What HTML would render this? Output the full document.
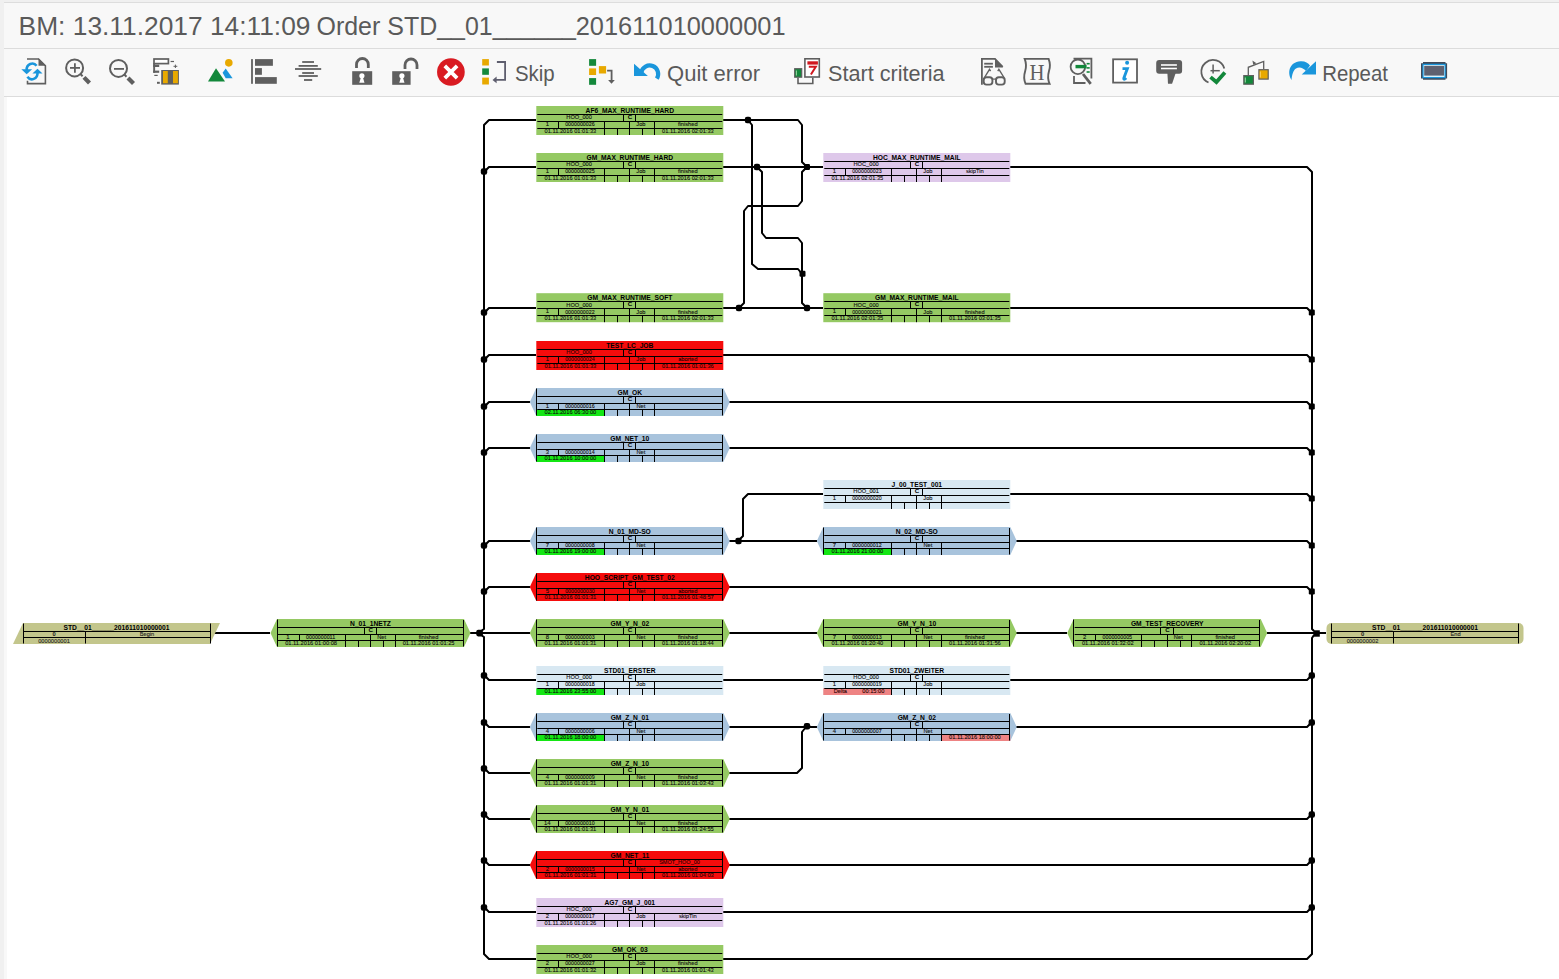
<!DOCTYPE html>
<html><head><meta charset="utf-8">
<style>
html,body{margin:0;padding:0;}
body{width:1559px;height:979px;overflow:hidden;background:#fff;position:relative;font-family:"Liberation Sans",sans-serif;}
.hdr{position:absolute;left:0;top:0;width:1559px;height:97px;background:#F8F8F8;}
.title{position:absolute;left:19px;top:8px;font-size:25.5px;color:#555;white-space:nowrap;line-height:34px;}
.lbl{position:absolute;top:59px;color:#5a5a5a;white-space:nowrap;line-height:26px;}
svg{position:absolute;left:0;top:0;}
</style></head><body>
<div class="hdr"></div>
<svg width="1559" height="979" viewBox="0 0 1559 979" font-family="Liberation Sans">
<rect x="0" y="0" width="1559" height="2" fill="#F0F0F0"/>
<rect x="0" y="2" width="1559" height="1" fill="#DDDDDD"/>
<rect x="4" y="48" width="1555" height="1" fill="#DCDCDC"/>
<rect x="4" y="96" width="1555" height="1" fill="#DCDCDC"/>
<rect x="0" y="0" width="4" height="979" fill="#F0F0F0"/>
<rect x="4" y="97" width="3" height="882" fill="#F8F8F8"/>
<g>
<path d="M27,59 H38.5 L45.4,65.8 V83.6 H27.5 V80.8" fill="none" stroke="#5F5F5F" stroke-width="1.6"/>
<path d="M38.5,58.2 L46.1,65.8 H38.5 Z" fill="#5F5F5F"/>
<path d="M26.7,70 A5.6,6 0 0 1 36.6,65.8" fill="none" stroke="#1A96DC" stroke-width="2.6"/>
<polygon points="21.3,69.3 32.1,69.3 26.7,74.2" fill="#1A96DC"/>
<path d="M37.5,73 A5.6,6 0 0 1 27.4,76.8" fill="none" stroke="#1A96DC" stroke-width="2.6"/>
<polygon points="32.4,73.6 42.5,73.6 37.5,68.8" fill="#1A96DC"/>
</g>
<g fill="none" stroke="#5F5F5F">
<circle cx="74.6" cy="67.9" r="8.5" stroke-width="2"/>
<line x1="80.2" y1="73.8" x2="82.6" y2="76.2" stroke-width="2"/>
<line x1="84" y1="77.4" x2="89.5" y2="83" stroke-width="4.2"/>
<line x1="70" y1="67.9" x2="80" y2="67.9" stroke-width="1.8"/>
<line x1="74.9" y1="63.2" x2="74.9" y2="72.7" stroke-width="1.8"/>
</g>
<g fill="none" stroke="#5F5F5F">
<circle cx="118.5" cy="68.4" r="8.5" stroke-width="2"/>
<line x1="124.1" y1="74.3" x2="126.5" y2="76.7" stroke-width="2"/>
<line x1="128" y1="77.9" x2="133.5" y2="83.4" stroke-width="4.2"/>
<line x1="114" y1="68.9" x2="124" y2="68.9" stroke-width="1.8"/>
</g>
<g>
<rect x="154" y="59" width="14.4" height="4.6" fill="#fff" stroke="#5F5F5F" stroke-width="1.7"/>
<rect x="153.2" y="63" width="1.9" height="9.8" fill="#5F5F5F"/>
<rect x="153.2" y="64.6" width="6" height="2.4" fill="#5F5F5F"/>
<rect x="153.2" y="70.6" width="6" height="2.2" fill="#5F5F5F"/>
<rect x="161.2" y="70" width="17.7" height="14.6" fill="#5F5F5F"/>
<rect x="163" y="71" width="4.8" height="12.2" fill="#E8A900"/>
<rect x="173" y="71" width="4.9" height="12.2" fill="#E8A900"/>
<line x1="170.6" y1="61.5" x2="174" y2="61.5" stroke="#5F5F5F" stroke-width="1.2"/>
<path d="M173.5,66.3 H177.3 M175.4,64.6 V68" stroke="#5F5F5F" stroke-width="1"/>
<line x1="154.3" y1="75.4" x2="157.7" y2="75.4" stroke="#5F5F5F" stroke-width="1.2"/>
<line x1="157" y1="82.8" x2="159.8" y2="82.8" stroke="#5F5F5F" stroke-width="2"/>
</g>
<g>
<polygon points="208,81.4 216,68.2 225,81.4" fill="#13883B"/>
<polygon points="222.6,72.75 225.7,68.6 232.6,78.3 225.7,78.3" fill="#1A96DC"/>
<circle cx="228.8" cy="62.85" r="3.8" fill="#E8A900"/>
</g>
<g fill="#5F5F5F">
<rect x="251.1" y="59.1" width="1.8" height="24.7"/>
<rect x="255" y="59.1" width="17.9" height="6.7"/>
<rect x="255" y="68.1" width="6.9" height="6.7"/>
<rect x="255" y="77.1" width="21.8" height="6.7"/>
</g>
<g stroke="#5F5F5F" stroke-width="1.8">
<line x1="302.2" y1="62" x2="314" y2="62"/>
<line x1="298.6" y1="65.9" x2="317.8" y2="65.9"/>
<line x1="295" y1="69" x2="321.2" y2="69"/>
<line x1="302.2" y1="73" x2="314" y2="73"/>
<line x1="298.6" y1="76" x2="317.8" y2="76"/>
<line x1="304" y1="80" x2="312.2" y2="80"/>
</g>
<g>
<path d="M356.5,67.9 V64.4 A5.9,5.9 0 0 1 368.3,64.4 V67.9" fill="none" stroke="#5F5F5F" stroke-width="2.8"/>
<rect x="352.2" y="71.2" width="20" height="13.6" fill="#5F5F5F"/>
<circle cx="361.9" cy="75.8" r="2.6" fill="#fff"/>
<polygon points="360.9,77.5 362.9,77.5 364.5,82.7 359.3,82.7" fill="#fff"/>
</g>
<g>
<path d="M405,68.9 V65 A6,6 0 0 1 417,65 V68.9" fill="none" stroke="#5F5F5F" stroke-width="2.8"/>
<rect x="392.2" y="71.2" width="18.4" height="13.6" fill="#5F5F5F"/>
<circle cx="401.9" cy="75.8" r="2.6" fill="#fff"/>
<polygon points="400.9,77.5 402.9,77.5 404.5,82.7 399.3,82.7" fill="#fff"/>
</g>
<g>
<circle cx="450.9" cy="72" r="13.85" fill="#D91B22"/>
<path d="M444.8,65.8 L457.1,78.1 M457.1,65.8 L444.8,78.1" stroke="#fff" stroke-width="3.8"/>
</g>
<g>
<rect x="482.2" y="59.1" width="6.7" height="6.4" fill="#E8A900"/>
<rect x="482.2" y="68.4" width="6.7" height="6.4" fill="#13883B"/>
<rect x="482.2" y="77.6" width="6.7" height="6.9" fill="#E8A900"/>
<path d="M496.9,62 H505.1 V79.9 H495.5" fill="none" stroke="#5E5E6E" stroke-width="1.8"/>
<polygon points="492.5,79.9 496.6,76.6 496.6,83.2" fill="#5E5E6E"/>
</g>
<g>
<rect x="589.1" y="59.1" width="7" height="6.7" fill="#13883B"/>
<rect x="589.1" y="68.4" width="7" height="6.6" fill="#E8A900"/>
<rect x="589.1" y="78.1" width="7" height="6.7" fill="#13883B"/>
<rect x="598.9" y="66.1" width="7.2" height="7.4" fill="#E8A900"/>
<path d="M607.1,70.7 H611.6 V81" fill="none" stroke="#5F5F5F" stroke-width="1.8"/>
<polygon points="608.1,80 614.8,80 611.5,83.8" fill="#5F5F5F"/>
</g>
<g>
<path d="M641.3,72.5 A8.5,8.5 0 1 1 656.8,78.6" fill="none" stroke="#1A96DC" stroke-width="4.2"/>
<polygon points="634,63.7 634,76.1 647.9,76.1" fill="#1A96DC"/>
</g>
<g>
<rect x="804.9" y="58.8" width="14.4" height="18.2" fill="#fff" stroke="#5F5F5F" stroke-width="1.6"/>
<rect x="807.4" y="61.3" width="10.5" height="3.3" fill="#D0171F"/>
<path d="M808.8,66.8 H815.8 L810.9,74.5" fill="none" stroke="#D0171F" stroke-width="2"/>
<path d="M798,77.8 V83.5 H812.8 V77.8" fill="none" stroke="#5F5F5F" stroke-width="1.6"/>
<rect x="794.7" y="68.7" width="7" height="8.5" fill="#13883B" stroke="#5F5F5F" stroke-width="1.2"/>
<line x1="796.4" y1="70.5" x2="796.4" y2="75.5" stroke="#BFE8BF" stroke-width="0.8"/>
</g>
<g fill="none" stroke="#5F5F5F">
<path d="M981.9,84.8 V58.9 H995 L1002.7,66.8" stroke-width="1.8"/>
<path d="M995,58.9 L1002.7,66.8 V67.6 H995 Z" fill="#5F5F5F" stroke="none"/>
<line x1="984.2" y1="63.7" x2="992.9" y2="63.7" stroke-width="1.8"/>
<line x1="984.2" y1="66.8" x2="992.9" y2="66.8" stroke-width="1.8"/>
<rect x="983.7" y="77.3" width="8.7" height="7.3" rx="2.8" stroke-width="1.9"/>
<rect x="996" y="77.3" width="8.7" height="7.3" rx="2.8" stroke-width="1.9"/>
<path d="M984.5,77.5 L989.5,69.4 L990.6,71.2 M1004,77.5 L998.9,69.4 L997.8,71.2" stroke-width="1.4"/>
<line x1="992.4" y1="79.1" x2="996" y2="79.1" stroke-width="1.2"/>
</g>
<g>
<path d="M1024.7,58.9 H1048.6 Q1051,65 1049,71 Q1047,78 1049.6,83.8 H1025.6 Q1023,78 1025.2,71 Q1027,65 1024.7,58.9 Z" fill="none" stroke="#5F5F5F" stroke-width="1.9"/>
<text x="1036.9" y="79.7" font-size="23" fill="#5F5F5F" text-anchor="middle" font-family="Liberation Serif" textLength="15" lengthAdjust="spacingAndGlyphs">H</text>
</g>
<g fill="none" stroke="#5F5F5F">
<path d="M1073.5,58.6 H1091.4 V78.6" stroke-width="1.8"/>
<path d="M1074,76 V83 H1085.5" stroke-width="1.8"/>
<circle cx="1077.9" cy="66.8" r="7.3" fill="#F8F8F8" stroke-width="1.8"/>
<line x1="1083" y1="74" x2="1090.7" y2="83.8" stroke-width="2.8"/>
<line x1="1075.5" y1="66.6" x2="1086.6" y2="66.6" stroke="#13883B" stroke-width="3.4"/>
<line x1="1086.6" y1="63.7" x2="1089.7" y2="63.7" stroke="#13883B" stroke-width="1.6"/>
<line x1="1086.6" y1="67.9" x2="1089.7" y2="67.9" stroke="#13883B" stroke-width="1.6"/>
<line x1="1086.6" y1="72" x2="1089.7" y2="72" stroke="#13883B" stroke-width="1.6"/>
</g>
<g>
<rect x="1113.1" y="59.3" width="23.9" height="23.3" fill="#fff" stroke="#5F5F5F" stroke-width="1.8"/>
<circle cx="1127.1" cy="62.7" r="2" fill="#1A96DC"/>
<path d="M1122.5,68.6 H1127.4 L1123.8,78.2 Q1123.4,80.5 1126.3,78" fill="none" stroke="#1A96DC" stroke-width="2.8"/>
</g>
<g>
<rect x="1156.2" y="59.9" width="25.9" height="13.9" rx="3" fill="#5F5F5F"/>
<polygon points="1167.4,73 1175.7,73 1172.1,83.8 1168,83.8" fill="#5F5F5F"/>
<line x1="1161" y1="65" x2="1176.9" y2="65" stroke="#fff" stroke-width="1.6"/>
<line x1="1161" y1="68.5" x2="1176.9" y2="68.5" stroke="#fff" stroke-width="1.6"/>
</g>
<g>
<path d="M1208.5,82.5 A11.7,11.7 0 1 1 1224.3,68.5" fill="none" stroke="#5F5F5F" stroke-width="1.8"/>
<line x1="1213.1" y1="64.5" x2="1213.1" y2="73.5" stroke="#5F5F5F" stroke-width="1.5"/>
<line x1="1210.5" y1="70.7" x2="1219.8" y2="70.7" stroke="#5F5F5F" stroke-width="1.5"/>
<path d="M1210.5,77.1 L1216.4,82 L1224.9,72.5" fill="none" stroke="#13883B" stroke-width="3.8"/>
</g>
<g>
<path d="M1248.3,75 V67.3 L1263.7,61.4 V69.1" fill="none" stroke="#5F5F5F" stroke-width="1.3"/>
<polygon points="1252.4,60.4 1253.2,64.8 1256.5,63.2" fill="#5F5F5F"/>
<rect x="1243.8" y="75.6" width="9.6" height="8.6" fill="#13883B" stroke="#5F5F5F" stroke-width="1.2"/>
<rect x="1258.9" y="69.7" width="9.3" height="9.4" fill="#E8A900" stroke="#5F5F5F" stroke-width="1.2"/>
<line x1="1245.3" y1="77.5" x2="1245.3" y2="82.5" stroke="#C8F0C8" stroke-width="0.8"/>
<line x1="1260.3" y1="71.5" x2="1260.3" y2="77.5" stroke="#FFE08A" stroke-width="0.8"/>
</g>
<g>
<path d="M1291.5,80 C1287,73 1289,62 1300.5,61.3 C1305,61 1308,63 1310,65.5 L1306,71 C1303,67.5 1299,66.5 1296,68.5 C1293,70.5 1292,75 1291.5,80 Z" fill="#1A96DC"/>
<polygon points="1316,61.2 1316,74.5 1301.7,74.5" fill="#1A96DC"/>
</g>
<g>
<path d="M1423,62 H1445.5 V63.2 H1447.1 V78.6 H1445.5 V79.8 H1423 V78.6 H1421 V63.2 H1423 Z" fill="#3E4A5A"/>
<rect x="1422.4" y="63.8" width="23.3" height="14.4" fill="#1A96DC"/>
<rect x="1423.6" y="65" width="20.9" height="12" fill="#D8F4FF"/>
<rect x="1424.2" y="65.8" width="19.8" height="9.8" fill="#5F6170"/>
</g>
<g fill="#5a5a5a" font-family="Liberation Sans">
<text x="18.6" y="35" font-size="26" textLength="291.9" lengthAdjust="spacingAndGlyphs">BM: 13.11.2017 14:11:09</text>
<text x="316.5" y="35" font-size="26" textLength="259.5" lengthAdjust="spacingAndGlyphs">Order STD__01______</text>
<text x="575.7" y="35" font-size="26" textLength="209.9" lengthAdjust="spacingAndGlyphs">201611010000001</text>
<text x="514.9" y="81" font-size="22.5" textLength="39.8" lengthAdjust="spacingAndGlyphs">Skip</text>
<text x="667.1" y="81" font-size="22.5" textLength="93" lengthAdjust="spacingAndGlyphs">Quit error</text>
<text x="828" y="81" font-size="22.5" textLength="116.6" lengthAdjust="spacingAndGlyphs">Start criteria</text>
<text x="1322.2" y="81" font-size="22.5" textLength="65.8" lengthAdjust="spacingAndGlyphs">Repeat</text>
</g>
<polyline points="536.0,120.0 489.0,120.0 484.0,125.0 484.0,629.0 481.0,631.0" fill="none" stroke="#000" stroke-width="2" stroke-linejoin="round"/>
<polyline points="481.0,635.0 484.0,637.0 484.0,954.0 489.0,959.0 536.0,959.0" fill="none" stroke="#000" stroke-width="2" stroke-linejoin="round"/>
<polyline points="484.0,172.0 489.0,167.0 536.0,167.0" fill="none" stroke="#000" stroke-width="2" stroke-linejoin="round"/>
<rect x="480.8" y="168.3" width="6.4" height="6.4" rx="2.2" fill="#000"/>
<polyline points="484.0,313.0 489.0,308.0 536.0,308.0" fill="none" stroke="#000" stroke-width="2" stroke-linejoin="round"/>
<rect x="480.8" y="309.3" width="6.4" height="6.4" rx="2.2" fill="#000"/>
<polyline points="484.0,360.0 489.0,355.0 536.0,355.0" fill="none" stroke="#000" stroke-width="2" stroke-linejoin="round"/>
<rect x="480.8" y="356.3" width="6.4" height="6.4" rx="2.2" fill="#000"/>
<polyline points="484.0,407.0 489.0,402.0 530.0,402.0" fill="none" stroke="#000" stroke-width="2" stroke-linejoin="round"/>
<rect x="480.8" y="403.3" width="6.4" height="6.4" rx="2.2" fill="#000"/>
<polyline points="484.0,453.0 489.0,448.0 530.0,448.0" fill="none" stroke="#000" stroke-width="2" stroke-linejoin="round"/>
<rect x="480.8" y="449.3" width="6.4" height="6.4" rx="2.2" fill="#000"/>
<polyline points="484.0,546.0 489.0,541.0 530.0,541.0" fill="none" stroke="#000" stroke-width="2" stroke-linejoin="round"/>
<rect x="480.8" y="542.3" width="6.4" height="6.4" rx="2.2" fill="#000"/>
<polyline points="484.0,592.0 489.0,587.0 530.0,587.0" fill="none" stroke="#000" stroke-width="2" stroke-linejoin="round"/>
<rect x="480.8" y="588.3" width="6.4" height="6.4" rx="2.2" fill="#000"/>
<polyline points="484.0,675.0 489.0,680.0 536.0,680.0" fill="none" stroke="#000" stroke-width="2" stroke-linejoin="round"/>
<rect x="480.8" y="672.3" width="6.4" height="6.4" rx="2.2" fill="#000"/>
<polyline points="484.0,722.0 489.0,727.0 530.0,727.0" fill="none" stroke="#000" stroke-width="2" stroke-linejoin="round"/>
<rect x="480.8" y="719.3" width="6.4" height="6.4" rx="2.2" fill="#000"/>
<polyline points="484.0,768.0 489.0,773.0 530.0,773.0" fill="none" stroke="#000" stroke-width="2" stroke-linejoin="round"/>
<rect x="480.8" y="765.3" width="6.4" height="6.4" rx="2.2" fill="#000"/>
<polyline points="484.0,814.0 489.0,819.0 530.0,819.0" fill="none" stroke="#000" stroke-width="2" stroke-linejoin="round"/>
<rect x="480.8" y="811.3" width="6.4" height="6.4" rx="2.2" fill="#000"/>
<polyline points="484.0,860.0 489.0,865.0 530.0,865.0" fill="none" stroke="#000" stroke-width="2" stroke-linejoin="round"/>
<rect x="480.8" y="857.3" width="6.4" height="6.4" rx="2.2" fill="#000"/>
<polyline points="484.0,907.0 489.0,912.0 536.0,912.0" fill="none" stroke="#000" stroke-width="2" stroke-linejoin="round"/>
<rect x="480.8" y="904.3" width="6.4" height="6.4" rx="2.2" fill="#000"/>
<polyline points="470.0,633.0 530.0,633.0" fill="none" stroke="#000" stroke-width="2" stroke-linejoin="round"/>
<rect x="476.3" y="629.8" width="6.6" height="6.6" rx="1.8" fill="#000"/>
<polyline points="214.0,633.0 270.0,633.0" fill="none" stroke="#000" stroke-width="2" stroke-linejoin="round"/>
<polyline points="1010.0,167.0 1307.0,167.0 1312.0,172.0 1312.0,629.0 1314.0,631.0" fill="none" stroke="#000" stroke-width="2" stroke-linejoin="round"/>
<polyline points="1314.0,635.0 1312.0,638.0 1312.0,954.0 1307.0,959.0 723.0,959.0" fill="none" stroke="#000" stroke-width="2" stroke-linejoin="round"/>
<polyline points="1010.0,308.0 1307.0,308.0 1312.0,313.0" fill="none" stroke="#000" stroke-width="2" stroke-linejoin="round"/>
<rect x="1308.8" y="309.5" width="6" height="6" rx="1.2" fill="#000"/>
<polyline points="723.0,355.0 1307.0,355.0 1312.0,360.0" fill="none" stroke="#000" stroke-width="2" stroke-linejoin="round"/>
<rect x="1308.8" y="356.5" width="6" height="6" rx="1.2" fill="#000"/>
<polyline points="729.0,402.0 1307.0,402.0 1312.0,407.0" fill="none" stroke="#000" stroke-width="2" stroke-linejoin="round"/>
<rect x="1308.8" y="403.5" width="6" height="6" rx="1.2" fill="#000"/>
<polyline points="729.0,448.0 1307.0,448.0 1312.0,453.0" fill="none" stroke="#000" stroke-width="2" stroke-linejoin="round"/>
<rect x="1308.8" y="449.5" width="6" height="6" rx="1.2" fill="#000"/>
<polyline points="1010.0,494.0 1307.0,494.0 1312.0,499.0" fill="none" stroke="#000" stroke-width="2" stroke-linejoin="round"/>
<rect x="1308.8" y="495.5" width="6" height="6" rx="1.2" fill="#000"/>
<polyline points="1016.0,541.0 1307.0,541.0 1312.0,546.0" fill="none" stroke="#000" stroke-width="2" stroke-linejoin="round"/>
<rect x="1308.8" y="542.5" width="6" height="6" rx="1.2" fill="#000"/>
<polyline points="729.0,587.0 1307.0,587.0 1312.0,592.0" fill="none" stroke="#000" stroke-width="2" stroke-linejoin="round"/>
<rect x="1308.8" y="588.5" width="6" height="6" rx="1.2" fill="#000"/>
<polyline points="1010.0,680.0 1307.0,680.0 1312.0,675.0" fill="none" stroke="#000" stroke-width="2" stroke-linejoin="round"/>
<rect x="1308.6" y="672.3" width="6.4" height="6.4" rx="2.2" fill="#000"/>
<polyline points="1016.0,727.0 1307.0,727.0 1312.0,722.0" fill="none" stroke="#000" stroke-width="2" stroke-linejoin="round"/>
<rect x="1308.6" y="719.3" width="6.4" height="6.4" rx="2.2" fill="#000"/>
<polyline points="729.0,819.0 1307.0,819.0 1312.0,814.0" fill="none" stroke="#000" stroke-width="2" stroke-linejoin="round"/>
<rect x="1308.6" y="811.3" width="6.4" height="6.4" rx="2.2" fill="#000"/>
<polyline points="729.0,865.0 1307.0,865.0 1312.0,860.0" fill="none" stroke="#000" stroke-width="2" stroke-linejoin="round"/>
<rect x="1308.6" y="857.3" width="6.4" height="6.4" rx="2.2" fill="#000"/>
<polyline points="723.0,912.0 1307.0,912.0 1312.0,907.0" fill="none" stroke="#000" stroke-width="2" stroke-linejoin="round"/>
<rect x="1308.6" y="904.3" width="6.4" height="6.4" rx="2.2" fill="#000"/>
<polyline points="1267.0,633.0 1326.0,633.0" fill="none" stroke="#000" stroke-width="2" stroke-linejoin="round"/>
<rect x="1313.4" y="630.3" width="6.4" height="6.4" fill="#000"/>
<polyline points="723.0,167.0 823.0,167.0" fill="none" stroke="#000" stroke-width="2" stroke-linejoin="round"/>
<polyline points="723.0,308.0 823.0,308.0" fill="none" stroke="#000" stroke-width="2" stroke-linejoin="round"/>
<polyline points="723.0,680.0 823.0,680.0" fill="none" stroke="#000" stroke-width="2" stroke-linejoin="round"/>
<polyline points="729.0,541.0 817.0,541.0" fill="none" stroke="#000" stroke-width="2" stroke-linejoin="round"/>
<polyline points="729.0,633.0 817.0,633.0" fill="none" stroke="#000" stroke-width="2" stroke-linejoin="round"/>
<polyline points="1016.0,633.0 1067.0,633.0" fill="none" stroke="#000" stroke-width="2" stroke-linejoin="round"/>
<polyline points="729.0,727.0 817.0,727.0" fill="none" stroke="#000" stroke-width="2" stroke-linejoin="round"/>
<polyline points="723.0,120.0 798.0,120.0 802.0,125.0 802.0,162.0 807.0,167.0" fill="none" stroke="#000" stroke-width="2" stroke-linejoin="round"/>
<polyline points="748.0,120.0 752.0,125.0 752.0,264.0 758.0,269.0 798.0,269.0 802.0,274.0" fill="none" stroke="#000" stroke-width="2" stroke-linejoin="round"/>
<polyline points="757.0,167.0 762.0,172.0 762.0,233.0 766.0,238.0 798.0,238.0 802.0,243.0 802.0,303.0 807.0,308.0" fill="none" stroke="#000" stroke-width="2" stroke-linejoin="round"/>
<polyline points="739.0,308.0 744.0,303.0 744.0,211.0 748.0,206.0 798.0,206.0 802.0,201.0 802.0,172.0 807.0,167.0" fill="none" stroke="#000" stroke-width="2" stroke-linejoin="round"/>
<rect x="744.8" y="116.8" width="6.4" height="6.4" rx="2.2" fill="#000"/>
<rect x="753.8" y="163.8" width="6.4" height="6.4" rx="2.2" fill="#000"/>
<rect x="804.0" y="164.0" width="6" height="6" rx="1.2" fill="#000"/>
<rect x="799.5" y="270.8" width="6" height="6" rx="1.2" fill="#000"/>
<rect x="735.8" y="304.8" width="6.4" height="6.4" rx="2.2" fill="#000"/>
<rect x="803.8" y="304.8" width="6.4" height="6.4" rx="2.2" fill="#000"/>
<polyline points="738.0,541.0 743.0,536.0 743.0,499.0 748.0,494.0 823.0,494.0" fill="none" stroke="#000" stroke-width="2" stroke-linejoin="round"/>
<rect x="735.3" y="537.8" width="6.4" height="6.4" rx="2.2" fill="#000"/>
<polyline points="729.0,773.0 797.0,773.0 802.0,768.0 802.0,732.0 806.0,727.0" fill="none" stroke="#000" stroke-width="2" stroke-linejoin="round"/>
<rect x="803.8" y="723.0" width="6.4" height="6.4" rx="2.2" fill="#000"/>
<rect x="536.3" y="106.0" width="187.0" height="29.0" fill="#95C963"/>
<line x1="537.3" y1="114.5" x2="722.3" y2="114.5" stroke="#000" stroke-width="1"/>
<line x1="537.3" y1="121.5" x2="722.3" y2="121.5" stroke="#000" stroke-width="1"/>
<line x1="537.3" y1="128.5" x2="722.3" y2="128.5" stroke="#000" stroke-width="1"/>
<line x1="623.5" y1="114.2" x2="623.5" y2="121.2" stroke="#000" stroke-width="1"/>
<line x1="635.5" y1="114.2" x2="635.5" y2="121.2" stroke="#000" stroke-width="1"/>
<line x1="558.5" y1="121.2" x2="558.5" y2="128.2" stroke="#000" stroke-width="1"/>
<line x1="604.5" y1="121.2" x2="604.5" y2="128.2" stroke="#000" stroke-width="1"/>
<line x1="629.5" y1="121.2" x2="629.5" y2="128.2" stroke="#000" stroke-width="1"/>
<line x1="654.5" y1="121.2" x2="654.5" y2="128.2" stroke="#000" stroke-width="1"/>
<line x1="604.5" y1="128.2" x2="604.5" y2="135.0" stroke="#000" stroke-width="1"/>
<line x1="617.5" y1="128.2" x2="617.5" y2="135.0" stroke="#000" stroke-width="1"/>
<line x1="629.5" y1="128.2" x2="629.5" y2="135.0" stroke="#000" stroke-width="1"/>
<line x1="642.5" y1="128.2" x2="642.5" y2="135.0" stroke="#000" stroke-width="1"/>
<line x1="654.5" y1="128.2" x2="654.5" y2="135.0" stroke="#000" stroke-width="1"/>
<text x="629.8" y="112.5" font-size="6.7" font-weight="bold" fill="#000" text-anchor="middle">AF6_MAX_RUNTIME_HARD</text>
<text x="579.1" y="119.4" font-size="5.7" stroke="#000" stroke-width="0.1" fill="#141414" text-anchor="middle">HOO_000</text>
<text x="630.0" y="119.1" font-size="6.2" font-weight="bold" fill="#000" text-anchor="middle">C</text>
<text x="679.5" y="119.4" font-size="5.5" stroke="#000" stroke-width="0.1" fill="#141414" text-anchor="middle"></text>
<text x="547.3" y="126.1" font-size="5.9" stroke="#000" stroke-width="0.1" fill="#111" text-anchor="middle">1</text>
<text x="579.9" y="126.4" font-size="5.3" stroke="#000" stroke-width="0.1" fill="#141414" text-anchor="middle">0000000026</text>
<text x="617.0" y="126.4" font-size="5.7" stroke="#000" stroke-width="0.1" fill="#141414" text-anchor="middle"></text>
<text x="640.9" y="126.4" font-size="5.7" stroke="#000" stroke-width="0.1" fill="#141414" text-anchor="middle">Job</text>
<text x="687.8" y="126.4" font-size="5.7" stroke="#000" stroke-width="0.1" fill="#141414" text-anchor="middle">finished</text>
<text x="570.4" y="133.1" font-size="5.7" stroke="#000" stroke-width="0.1" fill="#141414" text-anchor="middle">01.11.2016 01:01:33</text>
<text x="687.9" y="133.1" font-size="5.7" stroke="#000" stroke-width="0.1" fill="#141414" text-anchor="middle">01.11.2016 02:01:33</text>
<rect x="536.3" y="153.0" width="187.0" height="29.0" fill="#95C963"/>
<line x1="537.3" y1="161.5" x2="722.3" y2="161.5" stroke="#000" stroke-width="1"/>
<line x1="537.3" y1="168.5" x2="722.3" y2="168.5" stroke="#000" stroke-width="1"/>
<line x1="537.3" y1="175.5" x2="722.3" y2="175.5" stroke="#000" stroke-width="1"/>
<line x1="623.5" y1="161.2" x2="623.5" y2="168.2" stroke="#000" stroke-width="1"/>
<line x1="635.5" y1="161.2" x2="635.5" y2="168.2" stroke="#000" stroke-width="1"/>
<line x1="558.5" y1="168.2" x2="558.5" y2="175.2" stroke="#000" stroke-width="1"/>
<line x1="604.5" y1="168.2" x2="604.5" y2="175.2" stroke="#000" stroke-width="1"/>
<line x1="629.5" y1="168.2" x2="629.5" y2="175.2" stroke="#000" stroke-width="1"/>
<line x1="654.5" y1="168.2" x2="654.5" y2="175.2" stroke="#000" stroke-width="1"/>
<line x1="604.5" y1="175.2" x2="604.5" y2="182.0" stroke="#000" stroke-width="1"/>
<line x1="617.5" y1="175.2" x2="617.5" y2="182.0" stroke="#000" stroke-width="1"/>
<line x1="629.5" y1="175.2" x2="629.5" y2="182.0" stroke="#000" stroke-width="1"/>
<line x1="642.5" y1="175.2" x2="642.5" y2="182.0" stroke="#000" stroke-width="1"/>
<line x1="654.5" y1="175.2" x2="654.5" y2="182.0" stroke="#000" stroke-width="1"/>
<text x="629.8" y="159.5" font-size="6.7" font-weight="bold" fill="#000" text-anchor="middle">GM_MAX_RUNTIME_HARD</text>
<text x="579.1" y="166.4" font-size="5.7" stroke="#000" stroke-width="0.1" fill="#141414" text-anchor="middle">HOO_000</text>
<text x="630.0" y="166.1" font-size="6.2" font-weight="bold" fill="#000" text-anchor="middle">C</text>
<text x="679.5" y="166.4" font-size="5.5" stroke="#000" stroke-width="0.1" fill="#141414" text-anchor="middle"></text>
<text x="547.3" y="173.1" font-size="5.9" stroke="#000" stroke-width="0.1" fill="#111" text-anchor="middle">1</text>
<text x="579.9" y="173.4" font-size="5.3" stroke="#000" stroke-width="0.1" fill="#141414" text-anchor="middle">0000000025</text>
<text x="617.0" y="173.4" font-size="5.7" stroke="#000" stroke-width="0.1" fill="#141414" text-anchor="middle"></text>
<text x="640.9" y="173.4" font-size="5.7" stroke="#000" stroke-width="0.1" fill="#141414" text-anchor="middle">Job</text>
<text x="687.8" y="173.4" font-size="5.7" stroke="#000" stroke-width="0.1" fill="#141414" text-anchor="middle">finished</text>
<text x="570.4" y="180.1" font-size="5.7" stroke="#000" stroke-width="0.1" fill="#141414" text-anchor="middle">01.11.2016 01:01:33</text>
<text x="687.9" y="180.1" font-size="5.7" stroke="#000" stroke-width="0.1" fill="#141414" text-anchor="middle">01.11.2016 02:01:33</text>
<rect x="823.3" y="153.0" width="187.0" height="29.0" fill="#DEC8EA"/>
<line x1="824.3" y1="161.5" x2="1009.3" y2="161.5" stroke="#000" stroke-width="1"/>
<line x1="824.3" y1="168.5" x2="1009.3" y2="168.5" stroke="#000" stroke-width="1"/>
<line x1="824.3" y1="175.5" x2="1009.3" y2="175.5" stroke="#000" stroke-width="1"/>
<line x1="910.5" y1="161.2" x2="910.5" y2="168.2" stroke="#000" stroke-width="1"/>
<line x1="922.5" y1="161.2" x2="922.5" y2="168.2" stroke="#000" stroke-width="1"/>
<line x1="845.5" y1="168.2" x2="845.5" y2="175.2" stroke="#000" stroke-width="1"/>
<line x1="891.5" y1="168.2" x2="891.5" y2="175.2" stroke="#000" stroke-width="1"/>
<line x1="916.5" y1="168.2" x2="916.5" y2="175.2" stroke="#000" stroke-width="1"/>
<line x1="941.5" y1="168.2" x2="941.5" y2="175.2" stroke="#000" stroke-width="1"/>
<line x1="891.5" y1="175.2" x2="891.5" y2="182.0" stroke="#000" stroke-width="1"/>
<line x1="904.5" y1="175.2" x2="904.5" y2="182.0" stroke="#000" stroke-width="1"/>
<line x1="916.5" y1="175.2" x2="916.5" y2="182.0" stroke="#000" stroke-width="1"/>
<line x1="929.5" y1="175.2" x2="929.5" y2="182.0" stroke="#000" stroke-width="1"/>
<line x1="941.5" y1="175.2" x2="941.5" y2="182.0" stroke="#000" stroke-width="1"/>
<text x="916.8" y="159.5" font-size="6.7" font-weight="bold" fill="#000" text-anchor="middle">HOC_MAX_RUNTIME_MAIL</text>
<text x="866.1" y="166.4" font-size="5.7" stroke="#000" stroke-width="0.1" fill="#141414" text-anchor="middle">HOC_000</text>
<text x="917.0" y="166.1" font-size="6.2" font-weight="bold" fill="#000" text-anchor="middle">C</text>
<text x="966.5" y="166.4" font-size="5.5" stroke="#000" stroke-width="0.1" fill="#141414" text-anchor="middle"></text>
<text x="834.3" y="173.1" font-size="5.9" stroke="#000" stroke-width="0.1" fill="#111" text-anchor="middle">1</text>
<text x="866.9" y="173.4" font-size="5.3" stroke="#000" stroke-width="0.1" fill="#141414" text-anchor="middle">0000000023</text>
<text x="904.0" y="173.4" font-size="5.7" stroke="#000" stroke-width="0.1" fill="#141414" text-anchor="middle"></text>
<text x="927.9" y="173.4" font-size="5.7" stroke="#000" stroke-width="0.1" fill="#141414" text-anchor="middle">Job</text>
<text x="974.8" y="173.4" font-size="5.7" stroke="#000" stroke-width="0.1" fill="#141414" text-anchor="middle">skipTin</text>
<text x="857.4" y="180.1" font-size="5.7" stroke="#000" stroke-width="0.1" fill="#141414" text-anchor="middle">01.11.2016 02:01:35</text>
<text x="974.9" y="180.1" font-size="5.7" stroke="#000" stroke-width="0.1" fill="#141414" text-anchor="middle"></text>
<rect x="536.3" y="293.2" width="187.0" height="29.0" fill="#95C963"/>
<line x1="537.3" y1="301.5" x2="722.3" y2="301.5" stroke="#000" stroke-width="1"/>
<line x1="537.3" y1="308.5" x2="722.3" y2="308.5" stroke="#000" stroke-width="1"/>
<line x1="537.3" y1="315.5" x2="722.3" y2="315.5" stroke="#000" stroke-width="1"/>
<line x1="623.5" y1="301.4" x2="623.5" y2="308.4" stroke="#000" stroke-width="1"/>
<line x1="635.5" y1="301.4" x2="635.5" y2="308.4" stroke="#000" stroke-width="1"/>
<line x1="558.5" y1="308.4" x2="558.5" y2="315.4" stroke="#000" stroke-width="1"/>
<line x1="604.5" y1="308.4" x2="604.5" y2="315.4" stroke="#000" stroke-width="1"/>
<line x1="629.5" y1="308.4" x2="629.5" y2="315.4" stroke="#000" stroke-width="1"/>
<line x1="654.5" y1="308.4" x2="654.5" y2="315.4" stroke="#000" stroke-width="1"/>
<line x1="604.5" y1="315.4" x2="604.5" y2="322.2" stroke="#000" stroke-width="1"/>
<line x1="617.5" y1="315.4" x2="617.5" y2="322.2" stroke="#000" stroke-width="1"/>
<line x1="629.5" y1="315.4" x2="629.5" y2="322.2" stroke="#000" stroke-width="1"/>
<line x1="642.5" y1="315.4" x2="642.5" y2="322.2" stroke="#000" stroke-width="1"/>
<line x1="654.5" y1="315.4" x2="654.5" y2="322.2" stroke="#000" stroke-width="1"/>
<text x="629.8" y="299.7" font-size="6.7" font-weight="bold" fill="#000" text-anchor="middle">GM_MAX_RUNTIME_SOFT</text>
<text x="579.1" y="306.6" font-size="5.7" stroke="#000" stroke-width="0.1" fill="#141414" text-anchor="middle">HOO_000</text>
<text x="630.0" y="306.3" font-size="6.2" font-weight="bold" fill="#000" text-anchor="middle">C</text>
<text x="679.5" y="306.6" font-size="5.5" stroke="#000" stroke-width="0.1" fill="#141414" text-anchor="middle"></text>
<text x="547.3" y="313.3" font-size="5.9" stroke="#000" stroke-width="0.1" fill="#111" text-anchor="middle">1</text>
<text x="579.9" y="313.6" font-size="5.3" stroke="#000" stroke-width="0.1" fill="#141414" text-anchor="middle">0000000022</text>
<text x="617.0" y="313.6" font-size="5.7" stroke="#000" stroke-width="0.1" fill="#141414" text-anchor="middle"></text>
<text x="640.9" y="313.6" font-size="5.7" stroke="#000" stroke-width="0.1" fill="#141414" text-anchor="middle">Job</text>
<text x="687.8" y="313.6" font-size="5.7" stroke="#000" stroke-width="0.1" fill="#141414" text-anchor="middle">finished</text>
<text x="570.4" y="320.3" font-size="5.7" stroke="#000" stroke-width="0.1" fill="#141414" text-anchor="middle">01.11.2016 01:01:33</text>
<text x="687.9" y="320.3" font-size="5.7" stroke="#000" stroke-width="0.1" fill="#141414" text-anchor="middle">01.11.2016 02:01:33</text>
<rect x="823.3" y="293.2" width="187.0" height="29.0" fill="#95C963"/>
<line x1="824.3" y1="301.5" x2="1009.3" y2="301.5" stroke="#000" stroke-width="1"/>
<line x1="824.3" y1="308.5" x2="1009.3" y2="308.5" stroke="#000" stroke-width="1"/>
<line x1="824.3" y1="315.5" x2="1009.3" y2="315.5" stroke="#000" stroke-width="1"/>
<line x1="910.5" y1="301.4" x2="910.5" y2="308.4" stroke="#000" stroke-width="1"/>
<line x1="922.5" y1="301.4" x2="922.5" y2="308.4" stroke="#000" stroke-width="1"/>
<line x1="845.5" y1="308.4" x2="845.5" y2="315.4" stroke="#000" stroke-width="1"/>
<line x1="891.5" y1="308.4" x2="891.5" y2="315.4" stroke="#000" stroke-width="1"/>
<line x1="916.5" y1="308.4" x2="916.5" y2="315.4" stroke="#000" stroke-width="1"/>
<line x1="941.5" y1="308.4" x2="941.5" y2="315.4" stroke="#000" stroke-width="1"/>
<line x1="891.5" y1="315.4" x2="891.5" y2="322.2" stroke="#000" stroke-width="1"/>
<line x1="904.5" y1="315.4" x2="904.5" y2="322.2" stroke="#000" stroke-width="1"/>
<line x1="916.5" y1="315.4" x2="916.5" y2="322.2" stroke="#000" stroke-width="1"/>
<line x1="929.5" y1="315.4" x2="929.5" y2="322.2" stroke="#000" stroke-width="1"/>
<line x1="941.5" y1="315.4" x2="941.5" y2="322.2" stroke="#000" stroke-width="1"/>
<text x="916.8" y="299.7" font-size="6.7" font-weight="bold" fill="#000" text-anchor="middle">GM_MAX_RUNTIME_MAIL</text>
<text x="866.1" y="306.6" font-size="5.7" stroke="#000" stroke-width="0.1" fill="#141414" text-anchor="middle">HOC_000</text>
<text x="917.0" y="306.3" font-size="6.2" font-weight="bold" fill="#000" text-anchor="middle">C</text>
<text x="966.5" y="306.6" font-size="5.5" stroke="#000" stroke-width="0.1" fill="#141414" text-anchor="middle"></text>
<text x="834.3" y="313.3" font-size="5.9" stroke="#000" stroke-width="0.1" fill="#111" text-anchor="middle">1</text>
<text x="866.9" y="313.6" font-size="5.3" stroke="#000" stroke-width="0.1" fill="#141414" text-anchor="middle">0000000021</text>
<text x="904.0" y="313.6" font-size="5.7" stroke="#000" stroke-width="0.1" fill="#141414" text-anchor="middle"></text>
<text x="927.9" y="313.6" font-size="5.7" stroke="#000" stroke-width="0.1" fill="#141414" text-anchor="middle">Job</text>
<text x="974.8" y="313.6" font-size="5.7" stroke="#000" stroke-width="0.1" fill="#141414" text-anchor="middle">finished</text>
<text x="857.4" y="320.3" font-size="5.7" stroke="#000" stroke-width="0.1" fill="#141414" text-anchor="middle">01.11.2016 02:01:35</text>
<text x="974.9" y="320.3" font-size="5.7" stroke="#000" stroke-width="0.1" fill="#141414" text-anchor="middle">01.11.2016 03:01:35</text>
<rect x="536.3" y="341.0" width="187.0" height="29.0" fill="#F50C0C"/>
<line x1="537.3" y1="349.5" x2="722.3" y2="349.5" stroke="#000" stroke-width="1"/>
<line x1="537.3" y1="356.5" x2="722.3" y2="356.5" stroke="#000" stroke-width="1"/>
<line x1="537.3" y1="363.5" x2="722.3" y2="363.5" stroke="#000" stroke-width="1"/>
<line x1="623.5" y1="349.2" x2="623.5" y2="356.2" stroke="#000" stroke-width="1"/>
<line x1="635.5" y1="349.2" x2="635.5" y2="356.2" stroke="#000" stroke-width="1"/>
<line x1="558.5" y1="356.2" x2="558.5" y2="363.2" stroke="#000" stroke-width="1"/>
<line x1="604.5" y1="356.2" x2="604.5" y2="363.2" stroke="#000" stroke-width="1"/>
<line x1="629.5" y1="356.2" x2="629.5" y2="363.2" stroke="#000" stroke-width="1"/>
<line x1="654.5" y1="356.2" x2="654.5" y2="363.2" stroke="#000" stroke-width="1"/>
<line x1="604.5" y1="363.2" x2="604.5" y2="370.0" stroke="#000" stroke-width="1"/>
<line x1="617.5" y1="363.2" x2="617.5" y2="370.0" stroke="#000" stroke-width="1"/>
<line x1="629.5" y1="363.2" x2="629.5" y2="370.0" stroke="#000" stroke-width="1"/>
<line x1="642.5" y1="363.2" x2="642.5" y2="370.0" stroke="#000" stroke-width="1"/>
<line x1="654.5" y1="363.2" x2="654.5" y2="370.0" stroke="#000" stroke-width="1"/>
<text x="629.8" y="347.5" font-size="6.7" font-weight="bold" fill="#000" text-anchor="middle">TEST_LC_JOB</text>
<text x="579.1" y="354.4" font-size="5.7" stroke="#000" stroke-width="0.1" fill="#3a0000" text-anchor="middle">HOO_000</text>
<text x="630.0" y="354.1" font-size="6.2" font-weight="bold" fill="#000" text-anchor="middle">C</text>
<text x="679.5" y="354.4" font-size="5.5" stroke="#000" stroke-width="0.1" fill="#3a0000" text-anchor="middle"></text>
<text x="547.3" y="361.1" font-size="5.9" stroke="#000" stroke-width="0.1" fill="#111" text-anchor="middle">1</text>
<text x="579.9" y="361.4" font-size="5.3" stroke="#000" stroke-width="0.1" fill="#3a0000" text-anchor="middle">0000000024</text>
<text x="617.0" y="361.4" font-size="5.7" stroke="#000" stroke-width="0.1" fill="#3a0000" text-anchor="middle"></text>
<text x="640.9" y="361.4" font-size="5.7" stroke="#000" stroke-width="0.1" fill="#3a0000" text-anchor="middle">Job</text>
<text x="687.8" y="361.4" font-size="5.7" stroke="#000" stroke-width="0.1" fill="#3a0000" text-anchor="middle">aborted</text>
<text x="570.4" y="368.1" font-size="5.7" stroke="#000" stroke-width="0.1" fill="#3a0000" text-anchor="middle">01.11.2016 01:01:33</text>
<text x="687.9" y="368.1" font-size="5.7" stroke="#000" stroke-width="0.1" fill="#3a0000" text-anchor="middle">01.11.2016 01:01:36</text>
<polygon points="536.3,388.0 723.3,388.0 729.8,402.0 723.3,416.0 536.3,416.0 529.8,402.0" fill="#A8C3DC"/>
<rect x="536.3" y="409.4" width="68.2" height="6.6" fill="#14E614"/>
<line x1="537.3" y1="396.5" x2="722.3" y2="396.5" stroke="#000" stroke-width="1"/>
<line x1="537.3" y1="403.5" x2="722.3" y2="403.5" stroke="#000" stroke-width="1"/>
<line x1="537.3" y1="409.5" x2="722.3" y2="409.5" stroke="#000" stroke-width="1"/>
<line x1="623.5" y1="396.2" x2="623.5" y2="403.2" stroke="#000" stroke-width="1"/>
<line x1="635.5" y1="396.2" x2="635.5" y2="403.2" stroke="#000" stroke-width="1"/>
<line x1="558.5" y1="403.2" x2="558.5" y2="409.4" stroke="#000" stroke-width="1"/>
<line x1="604.5" y1="403.2" x2="604.5" y2="409.4" stroke="#000" stroke-width="1"/>
<line x1="629.5" y1="403.2" x2="629.5" y2="409.4" stroke="#000" stroke-width="1"/>
<line x1="654.5" y1="403.2" x2="654.5" y2="409.4" stroke="#000" stroke-width="1"/>
<line x1="604.5" y1="409.4" x2="604.5" y2="416.0" stroke="#000" stroke-width="1"/>
<line x1="617.5" y1="409.4" x2="617.5" y2="416.0" stroke="#000" stroke-width="1"/>
<line x1="629.5" y1="409.4" x2="629.5" y2="416.0" stroke="#000" stroke-width="1"/>
<line x1="642.5" y1="409.4" x2="642.5" y2="416.0" stroke="#000" stroke-width="1"/>
<line x1="654.5" y1="409.4" x2="654.5" y2="416.0" stroke="#000" stroke-width="1"/>
<line x1="536.5" y1="388.5" x2="536.5" y2="415.5" stroke="#000" stroke-width="1"/>
<line x1="722.5" y1="389.0" x2="722.5" y2="415.5" stroke="#000" stroke-width="1"/>
<text x="629.8" y="394.5" font-size="6.7" font-weight="bold" fill="#000" text-anchor="middle">GM_OK</text>
<text x="579.1" y="401.4" font-size="5.7" stroke="#000" stroke-width="0.1" fill="#141414" text-anchor="middle"></text>
<text x="630.0" y="401.1" font-size="6.2" font-weight="bold" fill="#000" text-anchor="middle">C</text>
<text x="679.5" y="401.4" font-size="5.5" stroke="#000" stroke-width="0.1" fill="#141414" text-anchor="middle"></text>
<text x="547.3" y="408.1" font-size="5.9" stroke="#000" stroke-width="0.1" fill="#111" text-anchor="middle">1</text>
<text x="579.9" y="408.4" font-size="5.3" stroke="#000" stroke-width="0.1" fill="#141414" text-anchor="middle">0000000016</text>
<text x="617.0" y="408.4" font-size="5.7" stroke="#000" stroke-width="0.1" fill="#141414" text-anchor="middle"></text>
<text x="640.9" y="408.4" font-size="5.7" stroke="#000" stroke-width="0.1" fill="#141414" text-anchor="middle">Net</text>
<text x="687.8" y="408.4" font-size="5.7" stroke="#000" stroke-width="0.1" fill="#141414" text-anchor="middle"></text>
<text x="570.4" y="414.3" font-size="5.7" stroke="#000" stroke-width="0.1" fill="#141414" text-anchor="middle">02.11.2016 06:30:00</text>
<text x="687.9" y="414.3" font-size="5.7" stroke="#000" stroke-width="0.1" fill="#141414" text-anchor="middle"></text>
<polygon points="536.3,434.0 723.3,434.0 729.8,448.0 723.3,462.0 536.3,462.0 529.8,448.0" fill="#A8C3DC"/>
<rect x="536.3" y="455.4" width="68.2" height="6.6" fill="#14E614"/>
<line x1="537.3" y1="442.5" x2="722.3" y2="442.5" stroke="#000" stroke-width="1"/>
<line x1="537.3" y1="449.5" x2="722.3" y2="449.5" stroke="#000" stroke-width="1"/>
<line x1="537.3" y1="455.5" x2="722.3" y2="455.5" stroke="#000" stroke-width="1"/>
<line x1="623.5" y1="442.2" x2="623.5" y2="449.2" stroke="#000" stroke-width="1"/>
<line x1="635.5" y1="442.2" x2="635.5" y2="449.2" stroke="#000" stroke-width="1"/>
<line x1="558.5" y1="449.2" x2="558.5" y2="455.4" stroke="#000" stroke-width="1"/>
<line x1="604.5" y1="449.2" x2="604.5" y2="455.4" stroke="#000" stroke-width="1"/>
<line x1="629.5" y1="449.2" x2="629.5" y2="455.4" stroke="#000" stroke-width="1"/>
<line x1="654.5" y1="449.2" x2="654.5" y2="455.4" stroke="#000" stroke-width="1"/>
<line x1="604.5" y1="455.4" x2="604.5" y2="462.0" stroke="#000" stroke-width="1"/>
<line x1="617.5" y1="455.4" x2="617.5" y2="462.0" stroke="#000" stroke-width="1"/>
<line x1="629.5" y1="455.4" x2="629.5" y2="462.0" stroke="#000" stroke-width="1"/>
<line x1="642.5" y1="455.4" x2="642.5" y2="462.0" stroke="#000" stroke-width="1"/>
<line x1="654.5" y1="455.4" x2="654.5" y2="462.0" stroke="#000" stroke-width="1"/>
<line x1="536.5" y1="434.5" x2="536.5" y2="461.5" stroke="#000" stroke-width="1"/>
<line x1="722.5" y1="435.0" x2="722.5" y2="461.5" stroke="#000" stroke-width="1"/>
<text x="629.8" y="440.5" font-size="6.7" font-weight="bold" fill="#000" text-anchor="middle">GM_NET_10</text>
<text x="579.1" y="447.4" font-size="5.7" stroke="#000" stroke-width="0.1" fill="#141414" text-anchor="middle"></text>
<text x="630.0" y="447.1" font-size="6.2" font-weight="bold" fill="#000" text-anchor="middle">C</text>
<text x="679.5" y="447.4" font-size="5.5" stroke="#000" stroke-width="0.1" fill="#141414" text-anchor="middle"></text>
<text x="547.3" y="454.1" font-size="5.9" stroke="#000" stroke-width="0.1" fill="#111" text-anchor="middle">3</text>
<text x="579.9" y="454.4" font-size="5.3" stroke="#000" stroke-width="0.1" fill="#141414" text-anchor="middle">0000000014</text>
<text x="617.0" y="454.4" font-size="5.7" stroke="#000" stroke-width="0.1" fill="#141414" text-anchor="middle"></text>
<text x="640.9" y="454.4" font-size="5.7" stroke="#000" stroke-width="0.1" fill="#141414" text-anchor="middle">Net</text>
<text x="687.8" y="454.4" font-size="5.7" stroke="#000" stroke-width="0.1" fill="#141414" text-anchor="middle"></text>
<text x="570.4" y="460.3" font-size="5.7" stroke="#000" stroke-width="0.1" fill="#141414" text-anchor="middle">01.11.2016 10:00:00</text>
<text x="687.9" y="460.3" font-size="5.7" stroke="#000" stroke-width="0.1" fill="#141414" text-anchor="middle"></text>
<rect x="823.3" y="480.0" width="187.0" height="29.0" fill="#D8E8F2"/>
<line x1="824.3" y1="488.5" x2="1009.3" y2="488.5" stroke="#000" stroke-width="1"/>
<line x1="824.3" y1="495.5" x2="1009.3" y2="495.5" stroke="#000" stroke-width="1"/>
<line x1="824.3" y1="502.5" x2="1009.3" y2="502.5" stroke="#000" stroke-width="1"/>
<line x1="910.5" y1="488.2" x2="910.5" y2="495.2" stroke="#000" stroke-width="1"/>
<line x1="922.5" y1="488.2" x2="922.5" y2="495.2" stroke="#000" stroke-width="1"/>
<line x1="845.5" y1="495.2" x2="845.5" y2="502.2" stroke="#000" stroke-width="1"/>
<line x1="891.5" y1="495.2" x2="891.5" y2="502.2" stroke="#000" stroke-width="1"/>
<line x1="916.5" y1="495.2" x2="916.5" y2="502.2" stroke="#000" stroke-width="1"/>
<line x1="941.5" y1="495.2" x2="941.5" y2="502.2" stroke="#000" stroke-width="1"/>
<line x1="891.5" y1="502.2" x2="891.5" y2="509.0" stroke="#000" stroke-width="1"/>
<line x1="904.5" y1="502.2" x2="904.5" y2="509.0" stroke="#000" stroke-width="1"/>
<line x1="916.5" y1="502.2" x2="916.5" y2="509.0" stroke="#000" stroke-width="1"/>
<line x1="929.5" y1="502.2" x2="929.5" y2="509.0" stroke="#000" stroke-width="1"/>
<line x1="941.5" y1="502.2" x2="941.5" y2="509.0" stroke="#000" stroke-width="1"/>
<text x="916.8" y="486.5" font-size="6.7" font-weight="bold" fill="#000" text-anchor="middle">J_00_TEST_001</text>
<text x="866.1" y="493.4" font-size="5.7" stroke="#000" stroke-width="0.1" fill="#141414" text-anchor="middle">HOO_001</text>
<text x="917.0" y="493.1" font-size="6.2" font-weight="bold" fill="#000" text-anchor="middle">C</text>
<text x="966.5" y="493.4" font-size="5.5" stroke="#000" stroke-width="0.1" fill="#141414" text-anchor="middle"></text>
<text x="834.3" y="500.1" font-size="5.9" stroke="#000" stroke-width="0.1" fill="#111" text-anchor="middle">1</text>
<text x="866.9" y="500.4" font-size="5.3" stroke="#000" stroke-width="0.1" fill="#141414" text-anchor="middle">0000000020</text>
<text x="904.0" y="500.4" font-size="5.7" stroke="#000" stroke-width="0.1" fill="#141414" text-anchor="middle"></text>
<text x="927.9" y="500.4" font-size="5.7" stroke="#000" stroke-width="0.1" fill="#141414" text-anchor="middle">Job</text>
<text x="974.8" y="500.4" font-size="5.7" stroke="#000" stroke-width="0.1" fill="#141414" text-anchor="middle"></text>
<text x="857.4" y="507.1" font-size="5.7" stroke="#000" stroke-width="0.1" fill="#141414" text-anchor="middle"></text>
<text x="974.9" y="507.1" font-size="5.7" stroke="#000" stroke-width="0.1" fill="#141414" text-anchor="middle"></text>
<polygon points="536.3,527.0 723.3,527.0 729.8,541.0 723.3,555.0 536.3,555.0 529.8,541.0" fill="#A8C3DC"/>
<rect x="536.3" y="548.4" width="68.2" height="6.6" fill="#14E614"/>
<line x1="537.3" y1="535.5" x2="722.3" y2="535.5" stroke="#000" stroke-width="1"/>
<line x1="537.3" y1="542.5" x2="722.3" y2="542.5" stroke="#000" stroke-width="1"/>
<line x1="537.3" y1="548.5" x2="722.3" y2="548.5" stroke="#000" stroke-width="1"/>
<line x1="623.5" y1="535.2" x2="623.5" y2="542.2" stroke="#000" stroke-width="1"/>
<line x1="635.5" y1="535.2" x2="635.5" y2="542.2" stroke="#000" stroke-width="1"/>
<line x1="558.5" y1="542.2" x2="558.5" y2="548.4" stroke="#000" stroke-width="1"/>
<line x1="604.5" y1="542.2" x2="604.5" y2="548.4" stroke="#000" stroke-width="1"/>
<line x1="629.5" y1="542.2" x2="629.5" y2="548.4" stroke="#000" stroke-width="1"/>
<line x1="654.5" y1="542.2" x2="654.5" y2="548.4" stroke="#000" stroke-width="1"/>
<line x1="604.5" y1="548.4" x2="604.5" y2="555.0" stroke="#000" stroke-width="1"/>
<line x1="617.5" y1="548.4" x2="617.5" y2="555.0" stroke="#000" stroke-width="1"/>
<line x1="629.5" y1="548.4" x2="629.5" y2="555.0" stroke="#000" stroke-width="1"/>
<line x1="642.5" y1="548.4" x2="642.5" y2="555.0" stroke="#000" stroke-width="1"/>
<line x1="654.5" y1="548.4" x2="654.5" y2="555.0" stroke="#000" stroke-width="1"/>
<line x1="536.5" y1="527.5" x2="536.5" y2="554.5" stroke="#000" stroke-width="1"/>
<line x1="722.5" y1="528.0" x2="722.5" y2="554.5" stroke="#000" stroke-width="1"/>
<text x="629.8" y="533.5" font-size="6.7" font-weight="bold" fill="#000" text-anchor="middle">N_01_MD-SO</text>
<text x="579.1" y="540.4" font-size="5.7" stroke="#000" stroke-width="0.1" fill="#141414" text-anchor="middle"></text>
<text x="630.0" y="540.1" font-size="6.2" font-weight="bold" fill="#000" text-anchor="middle">C</text>
<text x="679.5" y="540.4" font-size="5.5" stroke="#000" stroke-width="0.1" fill="#141414" text-anchor="middle"></text>
<text x="547.3" y="547.1" font-size="5.9" stroke="#000" stroke-width="0.1" fill="#111" text-anchor="middle">7</text>
<text x="579.9" y="547.4" font-size="5.3" stroke="#000" stroke-width="0.1" fill="#141414" text-anchor="middle">0000000008</text>
<text x="617.0" y="547.4" font-size="5.7" stroke="#000" stroke-width="0.1" fill="#141414" text-anchor="middle"></text>
<text x="640.9" y="547.4" font-size="5.7" stroke="#000" stroke-width="0.1" fill="#141414" text-anchor="middle">Net</text>
<text x="687.8" y="547.4" font-size="5.7" stroke="#000" stroke-width="0.1" fill="#141414" text-anchor="middle"></text>
<text x="570.4" y="553.3" font-size="5.7" stroke="#000" stroke-width="0.1" fill="#141414" text-anchor="middle">01.11.2016 19:00:00</text>
<text x="687.9" y="553.3" font-size="5.7" stroke="#000" stroke-width="0.1" fill="#141414" text-anchor="middle"></text>
<polygon points="823.3,527.0 1010.3,527.0 1016.8,541.0 1010.3,555.0 823.3,555.0 816.8,541.0" fill="#A8C3DC"/>
<rect x="823.3" y="548.4" width="68.2" height="6.6" fill="#14E614"/>
<line x1="824.3" y1="535.5" x2="1009.3" y2="535.5" stroke="#000" stroke-width="1"/>
<line x1="824.3" y1="542.5" x2="1009.3" y2="542.5" stroke="#000" stroke-width="1"/>
<line x1="824.3" y1="548.5" x2="1009.3" y2="548.5" stroke="#000" stroke-width="1"/>
<line x1="910.5" y1="535.2" x2="910.5" y2="542.2" stroke="#000" stroke-width="1"/>
<line x1="922.5" y1="535.2" x2="922.5" y2="542.2" stroke="#000" stroke-width="1"/>
<line x1="845.5" y1="542.2" x2="845.5" y2="548.4" stroke="#000" stroke-width="1"/>
<line x1="891.5" y1="542.2" x2="891.5" y2="548.4" stroke="#000" stroke-width="1"/>
<line x1="916.5" y1="542.2" x2="916.5" y2="548.4" stroke="#000" stroke-width="1"/>
<line x1="941.5" y1="542.2" x2="941.5" y2="548.4" stroke="#000" stroke-width="1"/>
<line x1="891.5" y1="548.4" x2="891.5" y2="555.0" stroke="#000" stroke-width="1"/>
<line x1="904.5" y1="548.4" x2="904.5" y2="555.0" stroke="#000" stroke-width="1"/>
<line x1="916.5" y1="548.4" x2="916.5" y2="555.0" stroke="#000" stroke-width="1"/>
<line x1="929.5" y1="548.4" x2="929.5" y2="555.0" stroke="#000" stroke-width="1"/>
<line x1="941.5" y1="548.4" x2="941.5" y2="555.0" stroke="#000" stroke-width="1"/>
<line x1="823.5" y1="527.5" x2="823.5" y2="554.5" stroke="#000" stroke-width="1"/>
<line x1="1009.5" y1="528.0" x2="1009.5" y2="554.5" stroke="#000" stroke-width="1"/>
<text x="916.8" y="533.5" font-size="6.7" font-weight="bold" fill="#000" text-anchor="middle">N_02_MD-SO</text>
<text x="866.1" y="540.4" font-size="5.7" stroke="#000" stroke-width="0.1" fill="#141414" text-anchor="middle"></text>
<text x="917.0" y="540.1" font-size="6.2" font-weight="bold" fill="#000" text-anchor="middle">C</text>
<text x="966.5" y="540.4" font-size="5.5" stroke="#000" stroke-width="0.1" fill="#141414" text-anchor="middle"></text>
<text x="834.3" y="547.1" font-size="5.9" stroke="#000" stroke-width="0.1" fill="#111" text-anchor="middle">7</text>
<text x="866.9" y="547.4" font-size="5.3" stroke="#000" stroke-width="0.1" fill="#141414" text-anchor="middle">0000000012</text>
<text x="904.0" y="547.4" font-size="5.7" stroke="#000" stroke-width="0.1" fill="#141414" text-anchor="middle"></text>
<text x="927.9" y="547.4" font-size="5.7" stroke="#000" stroke-width="0.1" fill="#141414" text-anchor="middle">Net</text>
<text x="974.8" y="547.4" font-size="5.7" stroke="#000" stroke-width="0.1" fill="#141414" text-anchor="middle"></text>
<text x="857.4" y="553.3" font-size="5.7" stroke="#000" stroke-width="0.1" fill="#141414" text-anchor="middle">01.11.2016 21:00:00</text>
<text x="974.9" y="553.3" font-size="5.7" stroke="#000" stroke-width="0.1" fill="#141414" text-anchor="middle"></text>
<polygon points="536.3,573.0 723.3,573.0 729.8,587.0 723.3,601.0 536.3,601.0 529.8,587.0" fill="#F50C0C"/>
<line x1="537.3" y1="581.5" x2="722.3" y2="581.5" stroke="#000" stroke-width="1"/>
<line x1="537.3" y1="588.5" x2="722.3" y2="588.5" stroke="#000" stroke-width="1"/>
<line x1="537.3" y1="594.5" x2="722.3" y2="594.5" stroke="#000" stroke-width="1"/>
<line x1="623.5" y1="581.2" x2="623.5" y2="588.2" stroke="#000" stroke-width="1"/>
<line x1="635.5" y1="581.2" x2="635.5" y2="588.2" stroke="#000" stroke-width="1"/>
<line x1="558.5" y1="588.2" x2="558.5" y2="594.4" stroke="#000" stroke-width="1"/>
<line x1="604.5" y1="588.2" x2="604.5" y2="594.4" stroke="#000" stroke-width="1"/>
<line x1="629.5" y1="588.2" x2="629.5" y2="594.4" stroke="#000" stroke-width="1"/>
<line x1="654.5" y1="588.2" x2="654.5" y2="594.4" stroke="#000" stroke-width="1"/>
<line x1="604.5" y1="594.4" x2="604.5" y2="601.0" stroke="#000" stroke-width="1"/>
<line x1="617.5" y1="594.4" x2="617.5" y2="601.0" stroke="#000" stroke-width="1"/>
<line x1="629.5" y1="594.4" x2="629.5" y2="601.0" stroke="#000" stroke-width="1"/>
<line x1="642.5" y1="594.4" x2="642.5" y2="601.0" stroke="#000" stroke-width="1"/>
<line x1="654.5" y1="594.4" x2="654.5" y2="601.0" stroke="#000" stroke-width="1"/>
<line x1="536.5" y1="573.5" x2="536.5" y2="600.5" stroke="#000" stroke-width="1"/>
<line x1="722.5" y1="574.0" x2="722.5" y2="600.5" stroke="#000" stroke-width="1"/>
<text x="629.8" y="579.5" font-size="6.7" font-weight="bold" fill="#000" text-anchor="middle">HOO_SCRIPT_GM_TEST_02</text>
<text x="579.1" y="586.4" font-size="5.7" stroke="#000" stroke-width="0.1" fill="#3a0000" text-anchor="middle"></text>
<text x="630.0" y="586.1" font-size="6.2" font-weight="bold" fill="#000" text-anchor="middle">C</text>
<text x="679.5" y="586.4" font-size="5.5" stroke="#000" stroke-width="0.1" fill="#3a0000" text-anchor="middle"></text>
<text x="547.3" y="593.1" font-size="5.9" stroke="#000" stroke-width="0.1" fill="#111" text-anchor="middle">5</text>
<text x="579.9" y="593.4" font-size="5.3" stroke="#000" stroke-width="0.1" fill="#3a0000" text-anchor="middle">0000000030</text>
<text x="617.0" y="593.4" font-size="5.7" stroke="#000" stroke-width="0.1" fill="#3a0000" text-anchor="middle"></text>
<text x="640.9" y="593.4" font-size="5.7" stroke="#000" stroke-width="0.1" fill="#3a0000" text-anchor="middle">Net</text>
<text x="687.8" y="593.4" font-size="5.7" stroke="#000" stroke-width="0.1" fill="#3a0000" text-anchor="middle">aborted</text>
<text x="570.4" y="599.3" font-size="5.7" stroke="#000" stroke-width="0.1" fill="#3a0000" text-anchor="middle">01.11.2016 01:01:31</text>
<text x="687.9" y="599.3" font-size="5.7" stroke="#000" stroke-width="0.1" fill="#3a0000" text-anchor="middle">01.11.2016 01:48:57</text>
<polygon points="277.0,619.0 464.0,619.0 470.5,633.0 464.0,647.0 277.0,647.0 270.5,633.0" fill="#95C963"/>
<line x1="278.0" y1="627.5" x2="463.0" y2="627.5" stroke="#000" stroke-width="1"/>
<line x1="278.0" y1="634.5" x2="463.0" y2="634.5" stroke="#000" stroke-width="1"/>
<line x1="278.0" y1="640.5" x2="463.0" y2="640.5" stroke="#000" stroke-width="1"/>
<line x1="364.5" y1="627.2" x2="364.5" y2="634.2" stroke="#000" stroke-width="1"/>
<line x1="376.5" y1="627.2" x2="376.5" y2="634.2" stroke="#000" stroke-width="1"/>
<line x1="299.5" y1="634.2" x2="299.5" y2="640.4" stroke="#000" stroke-width="1"/>
<line x1="345.5" y1="634.2" x2="345.5" y2="640.4" stroke="#000" stroke-width="1"/>
<line x1="370.5" y1="634.2" x2="370.5" y2="640.4" stroke="#000" stroke-width="1"/>
<line x1="395.5" y1="634.2" x2="395.5" y2="640.4" stroke="#000" stroke-width="1"/>
<line x1="345.5" y1="640.4" x2="345.5" y2="647.0" stroke="#000" stroke-width="1"/>
<line x1="358.5" y1="640.4" x2="358.5" y2="647.0" stroke="#000" stroke-width="1"/>
<line x1="370.5" y1="640.4" x2="370.5" y2="647.0" stroke="#000" stroke-width="1"/>
<line x1="383.5" y1="640.4" x2="383.5" y2="647.0" stroke="#000" stroke-width="1"/>
<line x1="395.5" y1="640.4" x2="395.5" y2="647.0" stroke="#000" stroke-width="1"/>
<line x1="277.5" y1="619.5" x2="277.5" y2="646.5" stroke="#000" stroke-width="1"/>
<line x1="463.5" y1="620.0" x2="463.5" y2="646.5" stroke="#000" stroke-width="1"/>
<text x="370.5" y="625.5" font-size="6.7" font-weight="bold" fill="#000" text-anchor="middle">N_01_1NETZ</text>
<text x="319.8" y="632.4" font-size="5.7" stroke="#000" stroke-width="0.1" fill="#141414" text-anchor="middle"></text>
<text x="370.8" y="632.1" font-size="6.2" font-weight="bold" fill="#000" text-anchor="middle">C</text>
<text x="420.2" y="632.4" font-size="5.5" stroke="#000" stroke-width="0.1" fill="#141414" text-anchor="middle"></text>
<text x="288.0" y="639.1" font-size="5.9" stroke="#000" stroke-width="0.1" fill="#111" text-anchor="middle">1</text>
<text x="320.6" y="639.4" font-size="5.3" stroke="#000" stroke-width="0.1" fill="#141414" text-anchor="middle">0000000011</text>
<text x="357.7" y="639.4" font-size="5.7" stroke="#000" stroke-width="0.1" fill="#141414" text-anchor="middle"></text>
<text x="381.6" y="639.4" font-size="5.7" stroke="#000" stroke-width="0.1" fill="#141414" text-anchor="middle">Net</text>
<text x="428.5" y="639.4" font-size="5.7" stroke="#000" stroke-width="0.1" fill="#141414" text-anchor="middle">finished</text>
<text x="311.1" y="645.3" font-size="5.7" stroke="#000" stroke-width="0.1" fill="#141414" text-anchor="middle">01.11.2016 01:00:08</text>
<text x="428.6" y="645.3" font-size="5.7" stroke="#000" stroke-width="0.1" fill="#141414" text-anchor="middle">01.11.2016 01:01:25</text>
<polygon points="536.3,619.0 723.3,619.0 729.8,633.0 723.3,647.0 536.3,647.0 529.8,633.0" fill="#95C963"/>
<line x1="537.3" y1="627.5" x2="722.3" y2="627.5" stroke="#000" stroke-width="1"/>
<line x1="537.3" y1="634.5" x2="722.3" y2="634.5" stroke="#000" stroke-width="1"/>
<line x1="537.3" y1="640.5" x2="722.3" y2="640.5" stroke="#000" stroke-width="1"/>
<line x1="623.5" y1="627.2" x2="623.5" y2="634.2" stroke="#000" stroke-width="1"/>
<line x1="635.5" y1="627.2" x2="635.5" y2="634.2" stroke="#000" stroke-width="1"/>
<line x1="558.5" y1="634.2" x2="558.5" y2="640.4" stroke="#000" stroke-width="1"/>
<line x1="604.5" y1="634.2" x2="604.5" y2="640.4" stroke="#000" stroke-width="1"/>
<line x1="629.5" y1="634.2" x2="629.5" y2="640.4" stroke="#000" stroke-width="1"/>
<line x1="654.5" y1="634.2" x2="654.5" y2="640.4" stroke="#000" stroke-width="1"/>
<line x1="604.5" y1="640.4" x2="604.5" y2="647.0" stroke="#000" stroke-width="1"/>
<line x1="617.5" y1="640.4" x2="617.5" y2="647.0" stroke="#000" stroke-width="1"/>
<line x1="629.5" y1="640.4" x2="629.5" y2="647.0" stroke="#000" stroke-width="1"/>
<line x1="642.5" y1="640.4" x2="642.5" y2="647.0" stroke="#000" stroke-width="1"/>
<line x1="654.5" y1="640.4" x2="654.5" y2="647.0" stroke="#000" stroke-width="1"/>
<line x1="536.5" y1="619.5" x2="536.5" y2="646.5" stroke="#000" stroke-width="1"/>
<line x1="722.5" y1="620.0" x2="722.5" y2="646.5" stroke="#000" stroke-width="1"/>
<text x="629.8" y="625.5" font-size="6.7" font-weight="bold" fill="#000" text-anchor="middle">GM_Y_N_02</text>
<text x="579.1" y="632.4" font-size="5.7" stroke="#000" stroke-width="0.1" fill="#141414" text-anchor="middle"></text>
<text x="630.0" y="632.1" font-size="6.2" font-weight="bold" fill="#000" text-anchor="middle">C</text>
<text x="679.5" y="632.4" font-size="5.5" stroke="#000" stroke-width="0.1" fill="#141414" text-anchor="middle"></text>
<text x="547.3" y="639.1" font-size="5.9" stroke="#000" stroke-width="0.1" fill="#111" text-anchor="middle">8</text>
<text x="579.9" y="639.4" font-size="5.3" stroke="#000" stroke-width="0.1" fill="#141414" text-anchor="middle">0000000003</text>
<text x="617.0" y="639.4" font-size="5.7" stroke="#000" stroke-width="0.1" fill="#141414" text-anchor="middle"></text>
<text x="640.9" y="639.4" font-size="5.7" stroke="#000" stroke-width="0.1" fill="#141414" text-anchor="middle">Net</text>
<text x="687.8" y="639.4" font-size="5.7" stroke="#000" stroke-width="0.1" fill="#141414" text-anchor="middle">finished</text>
<text x="570.4" y="645.3" font-size="5.7" stroke="#000" stroke-width="0.1" fill="#141414" text-anchor="middle">01.11.2016 01:01:31</text>
<text x="687.9" y="645.3" font-size="5.7" stroke="#000" stroke-width="0.1" fill="#141414" text-anchor="middle">01.11.2016 01:18:44</text>
<polygon points="823.3,619.0 1010.3,619.0 1016.8,633.0 1010.3,647.0 823.3,647.0 816.8,633.0" fill="#95C963"/>
<line x1="824.3" y1="627.5" x2="1009.3" y2="627.5" stroke="#000" stroke-width="1"/>
<line x1="824.3" y1="634.5" x2="1009.3" y2="634.5" stroke="#000" stroke-width="1"/>
<line x1="824.3" y1="640.5" x2="1009.3" y2="640.5" stroke="#000" stroke-width="1"/>
<line x1="910.5" y1="627.2" x2="910.5" y2="634.2" stroke="#000" stroke-width="1"/>
<line x1="922.5" y1="627.2" x2="922.5" y2="634.2" stroke="#000" stroke-width="1"/>
<line x1="845.5" y1="634.2" x2="845.5" y2="640.4" stroke="#000" stroke-width="1"/>
<line x1="891.5" y1="634.2" x2="891.5" y2="640.4" stroke="#000" stroke-width="1"/>
<line x1="916.5" y1="634.2" x2="916.5" y2="640.4" stroke="#000" stroke-width="1"/>
<line x1="941.5" y1="634.2" x2="941.5" y2="640.4" stroke="#000" stroke-width="1"/>
<line x1="891.5" y1="640.4" x2="891.5" y2="647.0" stroke="#000" stroke-width="1"/>
<line x1="904.5" y1="640.4" x2="904.5" y2="647.0" stroke="#000" stroke-width="1"/>
<line x1="916.5" y1="640.4" x2="916.5" y2="647.0" stroke="#000" stroke-width="1"/>
<line x1="929.5" y1="640.4" x2="929.5" y2="647.0" stroke="#000" stroke-width="1"/>
<line x1="941.5" y1="640.4" x2="941.5" y2="647.0" stroke="#000" stroke-width="1"/>
<line x1="823.5" y1="619.5" x2="823.5" y2="646.5" stroke="#000" stroke-width="1"/>
<line x1="1009.5" y1="620.0" x2="1009.5" y2="646.5" stroke="#000" stroke-width="1"/>
<text x="916.8" y="625.5" font-size="6.7" font-weight="bold" fill="#000" text-anchor="middle">GM_Y_N_10</text>
<text x="866.1" y="632.4" font-size="5.7" stroke="#000" stroke-width="0.1" fill="#141414" text-anchor="middle"></text>
<text x="917.0" y="632.1" font-size="6.2" font-weight="bold" fill="#000" text-anchor="middle">C</text>
<text x="966.5" y="632.4" font-size="5.5" stroke="#000" stroke-width="0.1" fill="#141414" text-anchor="middle"></text>
<text x="834.3" y="639.1" font-size="5.9" stroke="#000" stroke-width="0.1" fill="#111" text-anchor="middle">7</text>
<text x="866.9" y="639.4" font-size="5.3" stroke="#000" stroke-width="0.1" fill="#141414" text-anchor="middle">0000000013</text>
<text x="904.0" y="639.4" font-size="5.7" stroke="#000" stroke-width="0.1" fill="#141414" text-anchor="middle"></text>
<text x="927.9" y="639.4" font-size="5.7" stroke="#000" stroke-width="0.1" fill="#141414" text-anchor="middle">Net</text>
<text x="974.8" y="639.4" font-size="5.7" stroke="#000" stroke-width="0.1" fill="#141414" text-anchor="middle">finished</text>
<text x="857.4" y="645.3" font-size="5.7" stroke="#000" stroke-width="0.1" fill="#141414" text-anchor="middle">01.11.2016 01:20:40</text>
<text x="974.9" y="645.3" font-size="5.7" stroke="#000" stroke-width="0.1" fill="#141414" text-anchor="middle">01.11.2016 01:31:56</text>
<polygon points="1073.7,619.0 1260.7,619.0 1267.2,633.0 1260.7,647.0 1073.7,647.0 1067.2,633.0" fill="#95C963"/>
<line x1="1074.7" y1="627.5" x2="1259.7" y2="627.5" stroke="#000" stroke-width="1"/>
<line x1="1074.7" y1="634.5" x2="1259.7" y2="634.5" stroke="#000" stroke-width="1"/>
<line x1="1074.7" y1="640.5" x2="1259.7" y2="640.5" stroke="#000" stroke-width="1"/>
<line x1="1160.5" y1="627.2" x2="1160.5" y2="634.2" stroke="#000" stroke-width="1"/>
<line x1="1173.5" y1="627.2" x2="1173.5" y2="634.2" stroke="#000" stroke-width="1"/>
<line x1="1095.5" y1="634.2" x2="1095.5" y2="640.4" stroke="#000" stroke-width="1"/>
<line x1="1141.5" y1="634.2" x2="1141.5" y2="640.4" stroke="#000" stroke-width="1"/>
<line x1="1167.5" y1="634.2" x2="1167.5" y2="640.4" stroke="#000" stroke-width="1"/>
<line x1="1191.5" y1="634.2" x2="1191.5" y2="640.4" stroke="#000" stroke-width="1"/>
<line x1="1141.5" y1="640.4" x2="1141.5" y2="647.0" stroke="#000" stroke-width="1"/>
<line x1="1154.5" y1="640.4" x2="1154.5" y2="647.0" stroke="#000" stroke-width="1"/>
<line x1="1167.5" y1="640.4" x2="1167.5" y2="647.0" stroke="#000" stroke-width="1"/>
<line x1="1180.5" y1="640.4" x2="1180.5" y2="647.0" stroke="#000" stroke-width="1"/>
<line x1="1191.5" y1="640.4" x2="1191.5" y2="647.0" stroke="#000" stroke-width="1"/>
<line x1="1073.5" y1="619.5" x2="1073.5" y2="646.5" stroke="#000" stroke-width="1"/>
<line x1="1259.5" y1="620.0" x2="1259.5" y2="646.5" stroke="#000" stroke-width="1"/>
<text x="1167.2" y="625.5" font-size="6.7" font-weight="bold" fill="#000" text-anchor="middle">GM_TEST_RECOVERY</text>
<text x="1116.5" y="632.4" font-size="5.7" stroke="#000" stroke-width="0.1" fill="#141414" text-anchor="middle"></text>
<text x="1167.5" y="632.1" font-size="6.2" font-weight="bold" fill="#000" text-anchor="middle">C</text>
<text x="1216.9" y="632.4" font-size="5.5" stroke="#000" stroke-width="0.1" fill="#141414" text-anchor="middle"></text>
<text x="1084.7" y="639.1" font-size="5.9" stroke="#000" stroke-width="0.1" fill="#111" text-anchor="middle">2</text>
<text x="1117.3" y="639.4" font-size="5.3" stroke="#000" stroke-width="0.1" fill="#141414" text-anchor="middle">0000000005</text>
<text x="1154.4" y="639.4" font-size="5.7" stroke="#000" stroke-width="0.1" fill="#141414" text-anchor="middle"></text>
<text x="1178.3" y="639.4" font-size="5.7" stroke="#000" stroke-width="0.1" fill="#141414" text-anchor="middle">Net</text>
<text x="1225.2" y="639.4" font-size="5.7" stroke="#000" stroke-width="0.1" fill="#141414" text-anchor="middle">finished</text>
<text x="1107.8" y="645.3" font-size="5.7" stroke="#000" stroke-width="0.1" fill="#141414" text-anchor="middle">01.11.2016 01:32:02</text>
<text x="1225.3" y="645.3" font-size="5.7" stroke="#000" stroke-width="0.1" fill="#141414" text-anchor="middle">01.11.2016 02:20:02</text>
<rect x="536.3" y="666.0" width="187.0" height="29.0" fill="#D8E8F2"/>
<rect x="536.3" y="688.2" width="68.2" height="6.8" fill="#14E614"/>
<line x1="537.3" y1="674.5" x2="722.3" y2="674.5" stroke="#000" stroke-width="1"/>
<line x1="537.3" y1="681.5" x2="722.3" y2="681.5" stroke="#000" stroke-width="1"/>
<line x1="537.3" y1="688.5" x2="722.3" y2="688.5" stroke="#000" stroke-width="1"/>
<line x1="623.5" y1="674.2" x2="623.5" y2="681.2" stroke="#000" stroke-width="1"/>
<line x1="635.5" y1="674.2" x2="635.5" y2="681.2" stroke="#000" stroke-width="1"/>
<line x1="558.5" y1="681.2" x2="558.5" y2="688.2" stroke="#000" stroke-width="1"/>
<line x1="604.5" y1="681.2" x2="604.5" y2="688.2" stroke="#000" stroke-width="1"/>
<line x1="629.5" y1="681.2" x2="629.5" y2="688.2" stroke="#000" stroke-width="1"/>
<line x1="654.5" y1="681.2" x2="654.5" y2="688.2" stroke="#000" stroke-width="1"/>
<line x1="604.5" y1="688.2" x2="604.5" y2="695.0" stroke="#000" stroke-width="1"/>
<line x1="617.5" y1="688.2" x2="617.5" y2="695.0" stroke="#000" stroke-width="1"/>
<line x1="629.5" y1="688.2" x2="629.5" y2="695.0" stroke="#000" stroke-width="1"/>
<line x1="642.5" y1="688.2" x2="642.5" y2="695.0" stroke="#000" stroke-width="1"/>
<line x1="654.5" y1="688.2" x2="654.5" y2="695.0" stroke="#000" stroke-width="1"/>
<text x="629.8" y="672.5" font-size="6.7" font-weight="bold" fill="#000" text-anchor="middle">STD01_ERSTER</text>
<text x="579.1" y="679.4" font-size="5.7" stroke="#000" stroke-width="0.1" fill="#141414" text-anchor="middle">HOO_000</text>
<text x="630.0" y="679.1" font-size="6.2" font-weight="bold" fill="#000" text-anchor="middle">C</text>
<text x="679.5" y="679.4" font-size="5.5" stroke="#000" stroke-width="0.1" fill="#141414" text-anchor="middle"></text>
<text x="547.3" y="686.1" font-size="5.9" stroke="#000" stroke-width="0.1" fill="#111" text-anchor="middle">1</text>
<text x="579.9" y="686.4" font-size="5.3" stroke="#000" stroke-width="0.1" fill="#141414" text-anchor="middle">0000000018</text>
<text x="617.0" y="686.4" font-size="5.7" stroke="#000" stroke-width="0.1" fill="#141414" text-anchor="middle"></text>
<text x="640.9" y="686.4" font-size="5.7" stroke="#000" stroke-width="0.1" fill="#141414" text-anchor="middle">Job</text>
<text x="687.8" y="686.4" font-size="5.7" stroke="#000" stroke-width="0.1" fill="#141414" text-anchor="middle"></text>
<text x="570.4" y="693.1" font-size="5.7" stroke="#000" stroke-width="0.1" fill="#141414" text-anchor="middle">01.11.2016 23:55:00</text>
<text x="687.9" y="693.1" font-size="5.7" stroke="#000" stroke-width="0.1" fill="#141414" text-anchor="middle"></text>
<rect x="823.3" y="666.0" width="187.0" height="29.0" fill="#D8E8F2"/>
<rect x="823.3" y="688.2" width="68.2" height="6.8" fill="#EE8383"/>
<line x1="824.3" y1="674.5" x2="1009.3" y2="674.5" stroke="#000" stroke-width="1"/>
<line x1="824.3" y1="681.5" x2="1009.3" y2="681.5" stroke="#000" stroke-width="1"/>
<line x1="824.3" y1="688.5" x2="1009.3" y2="688.5" stroke="#000" stroke-width="1"/>
<line x1="910.5" y1="674.2" x2="910.5" y2="681.2" stroke="#000" stroke-width="1"/>
<line x1="922.5" y1="674.2" x2="922.5" y2="681.2" stroke="#000" stroke-width="1"/>
<line x1="845.5" y1="681.2" x2="845.5" y2="688.2" stroke="#000" stroke-width="1"/>
<line x1="891.5" y1="681.2" x2="891.5" y2="688.2" stroke="#000" stroke-width="1"/>
<line x1="916.5" y1="681.2" x2="916.5" y2="688.2" stroke="#000" stroke-width="1"/>
<line x1="941.5" y1="681.2" x2="941.5" y2="688.2" stroke="#000" stroke-width="1"/>
<line x1="891.5" y1="688.2" x2="891.5" y2="695.0" stroke="#000" stroke-width="1"/>
<line x1="904.5" y1="688.2" x2="904.5" y2="695.0" stroke="#000" stroke-width="1"/>
<line x1="916.5" y1="688.2" x2="916.5" y2="695.0" stroke="#000" stroke-width="1"/>
<line x1="929.5" y1="688.2" x2="929.5" y2="695.0" stroke="#000" stroke-width="1"/>
<line x1="941.5" y1="688.2" x2="941.5" y2="695.0" stroke="#000" stroke-width="1"/>
<text x="916.8" y="672.5" font-size="6.7" font-weight="bold" fill="#000" text-anchor="middle">STD01_ZWEITER</text>
<text x="866.1" y="679.4" font-size="5.7" stroke="#000" stroke-width="0.1" fill="#141414" text-anchor="middle">HOO_000</text>
<text x="917.0" y="679.1" font-size="6.2" font-weight="bold" fill="#000" text-anchor="middle">C</text>
<text x="966.5" y="679.4" font-size="5.5" stroke="#000" stroke-width="0.1" fill="#141414" text-anchor="middle"></text>
<text x="834.3" y="686.1" font-size="5.9" stroke="#000" stroke-width="0.1" fill="#111" text-anchor="middle">1</text>
<text x="866.9" y="686.4" font-size="5.3" stroke="#000" stroke-width="0.1" fill="#141414" text-anchor="middle">0000000019</text>
<text x="904.0" y="686.4" font-size="5.7" stroke="#000" stroke-width="0.1" fill="#141414" text-anchor="middle"></text>
<text x="927.9" y="686.4" font-size="5.7" stroke="#000" stroke-width="0.1" fill="#141414" text-anchor="middle">Job</text>
<text x="974.8" y="686.4" font-size="5.7" stroke="#000" stroke-width="0.1" fill="#141414" text-anchor="middle"></text>
<text x="840.3" y="693.1" font-size="5.7" stroke="#000" stroke-width="0.1" fill="#3a0000" text-anchor="middle">Delta</text>
<text x="873.3" y="693.1" font-size="5.7" stroke="#000" stroke-width="0.1" fill="#3a0000" text-anchor="middle">00:15:00</text>
<text x="974.9" y="693.1" font-size="5.7" stroke="#000" stroke-width="0.1" fill="#141414" text-anchor="middle"></text>
<polygon points="536.3,713.0 723.3,713.0 729.8,727.0 723.3,741.0 536.3,741.0 529.8,727.0" fill="#A8C3DC"/>
<rect x="536.3" y="734.4" width="68.2" height="6.6" fill="#14E614"/>
<line x1="537.3" y1="721.5" x2="722.3" y2="721.5" stroke="#000" stroke-width="1"/>
<line x1="537.3" y1="728.5" x2="722.3" y2="728.5" stroke="#000" stroke-width="1"/>
<line x1="537.3" y1="734.5" x2="722.3" y2="734.5" stroke="#000" stroke-width="1"/>
<line x1="623.5" y1="721.2" x2="623.5" y2="728.2" stroke="#000" stroke-width="1"/>
<line x1="635.5" y1="721.2" x2="635.5" y2="728.2" stroke="#000" stroke-width="1"/>
<line x1="558.5" y1="728.2" x2="558.5" y2="734.4" stroke="#000" stroke-width="1"/>
<line x1="604.5" y1="728.2" x2="604.5" y2="734.4" stroke="#000" stroke-width="1"/>
<line x1="629.5" y1="728.2" x2="629.5" y2="734.4" stroke="#000" stroke-width="1"/>
<line x1="654.5" y1="728.2" x2="654.5" y2="734.4" stroke="#000" stroke-width="1"/>
<line x1="604.5" y1="734.4" x2="604.5" y2="741.0" stroke="#000" stroke-width="1"/>
<line x1="617.5" y1="734.4" x2="617.5" y2="741.0" stroke="#000" stroke-width="1"/>
<line x1="629.5" y1="734.4" x2="629.5" y2="741.0" stroke="#000" stroke-width="1"/>
<line x1="642.5" y1="734.4" x2="642.5" y2="741.0" stroke="#000" stroke-width="1"/>
<line x1="654.5" y1="734.4" x2="654.5" y2="741.0" stroke="#000" stroke-width="1"/>
<line x1="536.5" y1="713.5" x2="536.5" y2="740.5" stroke="#000" stroke-width="1"/>
<line x1="722.5" y1="714.0" x2="722.5" y2="740.5" stroke="#000" stroke-width="1"/>
<text x="629.8" y="719.5" font-size="6.7" font-weight="bold" fill="#000" text-anchor="middle">GM_Z_N_01</text>
<text x="579.1" y="726.4" font-size="5.7" stroke="#000" stroke-width="0.1" fill="#141414" text-anchor="middle"></text>
<text x="630.0" y="726.1" font-size="6.2" font-weight="bold" fill="#000" text-anchor="middle">C</text>
<text x="679.5" y="726.4" font-size="5.5" stroke="#000" stroke-width="0.1" fill="#141414" text-anchor="middle"></text>
<text x="547.3" y="733.1" font-size="5.9" stroke="#000" stroke-width="0.1" fill="#111" text-anchor="middle">4</text>
<text x="579.9" y="733.4" font-size="5.3" stroke="#000" stroke-width="0.1" fill="#141414" text-anchor="middle">0000000006</text>
<text x="617.0" y="733.4" font-size="5.7" stroke="#000" stroke-width="0.1" fill="#141414" text-anchor="middle"></text>
<text x="640.9" y="733.4" font-size="5.7" stroke="#000" stroke-width="0.1" fill="#141414" text-anchor="middle">Net</text>
<text x="687.8" y="733.4" font-size="5.7" stroke="#000" stroke-width="0.1" fill="#141414" text-anchor="middle"></text>
<text x="570.4" y="739.3" font-size="5.7" stroke="#000" stroke-width="0.1" fill="#141414" text-anchor="middle">01.11.2016 18:00:00</text>
<text x="687.9" y="739.3" font-size="5.7" stroke="#000" stroke-width="0.1" fill="#141414" text-anchor="middle"></text>
<polygon points="823.3,713.0 1010.3,713.0 1016.8,727.0 1010.3,741.0 823.3,741.0 816.8,727.0" fill="#A8C3DC"/>
<rect x="941.5" y="734.4" width="68.8" height="6.6" fill="#EE8383"/>
<line x1="824.3" y1="721.5" x2="1009.3" y2="721.5" stroke="#000" stroke-width="1"/>
<line x1="824.3" y1="728.5" x2="1009.3" y2="728.5" stroke="#000" stroke-width="1"/>
<line x1="824.3" y1="734.5" x2="1009.3" y2="734.5" stroke="#000" stroke-width="1"/>
<line x1="910.5" y1="721.2" x2="910.5" y2="728.2" stroke="#000" stroke-width="1"/>
<line x1="922.5" y1="721.2" x2="922.5" y2="728.2" stroke="#000" stroke-width="1"/>
<line x1="845.5" y1="728.2" x2="845.5" y2="734.4" stroke="#000" stroke-width="1"/>
<line x1="891.5" y1="728.2" x2="891.5" y2="734.4" stroke="#000" stroke-width="1"/>
<line x1="916.5" y1="728.2" x2="916.5" y2="734.4" stroke="#000" stroke-width="1"/>
<line x1="941.5" y1="728.2" x2="941.5" y2="734.4" stroke="#000" stroke-width="1"/>
<line x1="891.5" y1="734.4" x2="891.5" y2="741.0" stroke="#000" stroke-width="1"/>
<line x1="904.5" y1="734.4" x2="904.5" y2="741.0" stroke="#000" stroke-width="1"/>
<line x1="916.5" y1="734.4" x2="916.5" y2="741.0" stroke="#000" stroke-width="1"/>
<line x1="929.5" y1="734.4" x2="929.5" y2="741.0" stroke="#000" stroke-width="1"/>
<line x1="941.5" y1="734.4" x2="941.5" y2="741.0" stroke="#000" stroke-width="1"/>
<line x1="823.5" y1="713.5" x2="823.5" y2="740.5" stroke="#000" stroke-width="1"/>
<line x1="1009.5" y1="714.0" x2="1009.5" y2="740.5" stroke="#000" stroke-width="1"/>
<text x="916.8" y="719.5" font-size="6.7" font-weight="bold" fill="#000" text-anchor="middle">GM_Z_N_02</text>
<text x="866.1" y="726.4" font-size="5.7" stroke="#000" stroke-width="0.1" fill="#141414" text-anchor="middle"></text>
<text x="917.0" y="726.1" font-size="6.2" font-weight="bold" fill="#000" text-anchor="middle">C</text>
<text x="966.5" y="726.4" font-size="5.5" stroke="#000" stroke-width="0.1" fill="#141414" text-anchor="middle"></text>
<text x="834.3" y="733.1" font-size="5.9" stroke="#000" stroke-width="0.1" fill="#111" text-anchor="middle">4</text>
<text x="866.9" y="733.4" font-size="5.3" stroke="#000" stroke-width="0.1" fill="#141414" text-anchor="middle">0000000007</text>
<text x="904.0" y="733.4" font-size="5.7" stroke="#000" stroke-width="0.1" fill="#141414" text-anchor="middle"></text>
<text x="927.9" y="733.4" font-size="5.7" stroke="#000" stroke-width="0.1" fill="#141414" text-anchor="middle">Net</text>
<text x="974.8" y="733.4" font-size="5.7" stroke="#000" stroke-width="0.1" fill="#141414" text-anchor="middle"></text>
<text x="857.4" y="739.3" font-size="5.7" stroke="#000" stroke-width="0.1" fill="#141414" text-anchor="middle"></text>
<text x="974.9" y="739.3" font-size="5.7" stroke="#000" stroke-width="0.1" fill="#141414" text-anchor="middle">01.11.2016 18:00:00</text>
<polygon points="536.3,759.0 723.3,759.0 729.8,773.0 723.3,787.0 536.3,787.0 529.8,773.0" fill="#95C963"/>
<line x1="537.3" y1="767.5" x2="722.3" y2="767.5" stroke="#000" stroke-width="1"/>
<line x1="537.3" y1="774.5" x2="722.3" y2="774.5" stroke="#000" stroke-width="1"/>
<line x1="537.3" y1="780.5" x2="722.3" y2="780.5" stroke="#000" stroke-width="1"/>
<line x1="623.5" y1="767.2" x2="623.5" y2="774.2" stroke="#000" stroke-width="1"/>
<line x1="635.5" y1="767.2" x2="635.5" y2="774.2" stroke="#000" stroke-width="1"/>
<line x1="558.5" y1="774.2" x2="558.5" y2="780.4" stroke="#000" stroke-width="1"/>
<line x1="604.5" y1="774.2" x2="604.5" y2="780.4" stroke="#000" stroke-width="1"/>
<line x1="629.5" y1="774.2" x2="629.5" y2="780.4" stroke="#000" stroke-width="1"/>
<line x1="654.5" y1="774.2" x2="654.5" y2="780.4" stroke="#000" stroke-width="1"/>
<line x1="604.5" y1="780.4" x2="604.5" y2="787.0" stroke="#000" stroke-width="1"/>
<line x1="617.5" y1="780.4" x2="617.5" y2="787.0" stroke="#000" stroke-width="1"/>
<line x1="629.5" y1="780.4" x2="629.5" y2="787.0" stroke="#000" stroke-width="1"/>
<line x1="642.5" y1="780.4" x2="642.5" y2="787.0" stroke="#000" stroke-width="1"/>
<line x1="654.5" y1="780.4" x2="654.5" y2="787.0" stroke="#000" stroke-width="1"/>
<line x1="536.5" y1="759.5" x2="536.5" y2="786.5" stroke="#000" stroke-width="1"/>
<line x1="722.5" y1="760.0" x2="722.5" y2="786.5" stroke="#000" stroke-width="1"/>
<text x="629.8" y="765.5" font-size="6.7" font-weight="bold" fill="#000" text-anchor="middle">GM_Z_N_10</text>
<text x="579.1" y="772.4" font-size="5.7" stroke="#000" stroke-width="0.1" fill="#141414" text-anchor="middle"></text>
<text x="630.0" y="772.1" font-size="6.2" font-weight="bold" fill="#000" text-anchor="middle">C</text>
<text x="679.5" y="772.4" font-size="5.5" stroke="#000" stroke-width="0.1" fill="#141414" text-anchor="middle"></text>
<text x="547.3" y="779.1" font-size="5.9" stroke="#000" stroke-width="0.1" fill="#111" text-anchor="middle">4</text>
<text x="579.9" y="779.4" font-size="5.3" stroke="#000" stroke-width="0.1" fill="#141414" text-anchor="middle">0000000009</text>
<text x="617.0" y="779.4" font-size="5.7" stroke="#000" stroke-width="0.1" fill="#141414" text-anchor="middle"></text>
<text x="640.9" y="779.4" font-size="5.7" stroke="#000" stroke-width="0.1" fill="#141414" text-anchor="middle">Net</text>
<text x="687.8" y="779.4" font-size="5.7" stroke="#000" stroke-width="0.1" fill="#141414" text-anchor="middle">finished</text>
<text x="570.4" y="785.3" font-size="5.7" stroke="#000" stroke-width="0.1" fill="#141414" text-anchor="middle">01.11.2016 01:01:31</text>
<text x="687.9" y="785.3" font-size="5.7" stroke="#000" stroke-width="0.1" fill="#141414" text-anchor="middle">01.11.2016 01:03:43</text>
<polygon points="536.3,805.0 723.3,805.0 729.8,819.0 723.3,833.0 536.3,833.0 529.8,819.0" fill="#95C963"/>
<line x1="537.3" y1="813.5" x2="722.3" y2="813.5" stroke="#000" stroke-width="1"/>
<line x1="537.3" y1="820.5" x2="722.3" y2="820.5" stroke="#000" stroke-width="1"/>
<line x1="537.3" y1="826.5" x2="722.3" y2="826.5" stroke="#000" stroke-width="1"/>
<line x1="623.5" y1="813.2" x2="623.5" y2="820.2" stroke="#000" stroke-width="1"/>
<line x1="635.5" y1="813.2" x2="635.5" y2="820.2" stroke="#000" stroke-width="1"/>
<line x1="558.5" y1="820.2" x2="558.5" y2="826.4" stroke="#000" stroke-width="1"/>
<line x1="604.5" y1="820.2" x2="604.5" y2="826.4" stroke="#000" stroke-width="1"/>
<line x1="629.5" y1="820.2" x2="629.5" y2="826.4" stroke="#000" stroke-width="1"/>
<line x1="654.5" y1="820.2" x2="654.5" y2="826.4" stroke="#000" stroke-width="1"/>
<line x1="604.5" y1="826.4" x2="604.5" y2="833.0" stroke="#000" stroke-width="1"/>
<line x1="617.5" y1="826.4" x2="617.5" y2="833.0" stroke="#000" stroke-width="1"/>
<line x1="629.5" y1="826.4" x2="629.5" y2="833.0" stroke="#000" stroke-width="1"/>
<line x1="642.5" y1="826.4" x2="642.5" y2="833.0" stroke="#000" stroke-width="1"/>
<line x1="654.5" y1="826.4" x2="654.5" y2="833.0" stroke="#000" stroke-width="1"/>
<line x1="536.5" y1="805.5" x2="536.5" y2="832.5" stroke="#000" stroke-width="1"/>
<line x1="722.5" y1="806.0" x2="722.5" y2="832.5" stroke="#000" stroke-width="1"/>
<text x="629.8" y="811.5" font-size="6.7" font-weight="bold" fill="#000" text-anchor="middle">GM_Y_N_01</text>
<text x="579.1" y="818.4" font-size="5.7" stroke="#000" stroke-width="0.1" fill="#141414" text-anchor="middle"></text>
<text x="630.0" y="818.1" font-size="6.2" font-weight="bold" fill="#000" text-anchor="middle">C</text>
<text x="679.5" y="818.4" font-size="5.5" stroke="#000" stroke-width="0.1" fill="#141414" text-anchor="middle"></text>
<text x="547.3" y="825.1" font-size="5.9" stroke="#000" stroke-width="0.1" fill="#111" text-anchor="middle">14</text>
<text x="579.9" y="825.4" font-size="5.3" stroke="#000" stroke-width="0.1" fill="#141414" text-anchor="middle">0000000010</text>
<text x="617.0" y="825.4" font-size="5.7" stroke="#000" stroke-width="0.1" fill="#141414" text-anchor="middle"></text>
<text x="640.9" y="825.4" font-size="5.7" stroke="#000" stroke-width="0.1" fill="#141414" text-anchor="middle">Net</text>
<text x="687.8" y="825.4" font-size="5.7" stroke="#000" stroke-width="0.1" fill="#141414" text-anchor="middle">finished</text>
<text x="570.4" y="831.3" font-size="5.7" stroke="#000" stroke-width="0.1" fill="#141414" text-anchor="middle">01.11.2016 01:01:31</text>
<text x="687.9" y="831.3" font-size="5.7" stroke="#000" stroke-width="0.1" fill="#141414" text-anchor="middle">01.11.2016 01:24:55</text>
<polygon points="536.3,851.0 723.3,851.0 729.8,865.0 723.3,879.0 536.3,879.0 529.8,865.0" fill="#F50C0C"/>
<line x1="537.3" y1="859.5" x2="722.3" y2="859.5" stroke="#000" stroke-width="1"/>
<line x1="537.3" y1="866.5" x2="722.3" y2="866.5" stroke="#000" stroke-width="1"/>
<line x1="537.3" y1="872.5" x2="722.3" y2="872.5" stroke="#000" stroke-width="1"/>
<line x1="623.5" y1="859.2" x2="623.5" y2="866.2" stroke="#000" stroke-width="1"/>
<line x1="635.5" y1="859.2" x2="635.5" y2="866.2" stroke="#000" stroke-width="1"/>
<line x1="558.5" y1="866.2" x2="558.5" y2="872.4" stroke="#000" stroke-width="1"/>
<line x1="604.5" y1="866.2" x2="604.5" y2="872.4" stroke="#000" stroke-width="1"/>
<line x1="629.5" y1="866.2" x2="629.5" y2="872.4" stroke="#000" stroke-width="1"/>
<line x1="654.5" y1="866.2" x2="654.5" y2="872.4" stroke="#000" stroke-width="1"/>
<line x1="604.5" y1="872.4" x2="604.5" y2="879.0" stroke="#000" stroke-width="1"/>
<line x1="617.5" y1="872.4" x2="617.5" y2="879.0" stroke="#000" stroke-width="1"/>
<line x1="629.5" y1="872.4" x2="629.5" y2="879.0" stroke="#000" stroke-width="1"/>
<line x1="642.5" y1="872.4" x2="642.5" y2="879.0" stroke="#000" stroke-width="1"/>
<line x1="654.5" y1="872.4" x2="654.5" y2="879.0" stroke="#000" stroke-width="1"/>
<line x1="536.5" y1="851.5" x2="536.5" y2="878.5" stroke="#000" stroke-width="1"/>
<line x1="722.5" y1="852.0" x2="722.5" y2="878.5" stroke="#000" stroke-width="1"/>
<text x="629.8" y="857.5" font-size="6.7" font-weight="bold" fill="#000" text-anchor="middle">GM_NET_11</text>
<text x="579.1" y="864.4" font-size="5.7" stroke="#000" stroke-width="0.1" fill="#3a0000" text-anchor="middle"></text>
<text x="630.0" y="864.1" font-size="6.2" font-weight="bold" fill="#000" text-anchor="middle">C</text>
<text x="679.5" y="864.4" font-size="5.5" stroke="#000" stroke-width="0.1" fill="#3a0000" text-anchor="middle">SMOT_HOO_00</text>
<text x="547.3" y="871.1" font-size="5.9" stroke="#000" stroke-width="0.1" fill="#111" text-anchor="middle">2</text>
<text x="579.9" y="871.4" font-size="5.3" stroke="#000" stroke-width="0.1" fill="#3a0000" text-anchor="middle">0000000015</text>
<text x="617.0" y="871.4" font-size="5.7" stroke="#000" stroke-width="0.1" fill="#3a0000" text-anchor="middle"></text>
<text x="640.9" y="871.4" font-size="5.7" stroke="#000" stroke-width="0.1" fill="#3a0000" text-anchor="middle">Net</text>
<text x="687.8" y="871.4" font-size="5.7" stroke="#000" stroke-width="0.1" fill="#3a0000" text-anchor="middle">aborted</text>
<text x="570.4" y="877.3" font-size="5.7" stroke="#000" stroke-width="0.1" fill="#3a0000" text-anchor="middle">01.11.2016 01:01:31</text>
<text x="687.9" y="877.3" font-size="5.7" stroke="#000" stroke-width="0.1" fill="#3a0000" text-anchor="middle">01.11.2016 01:04:03</text>
<rect x="536.3" y="898.0" width="187.0" height="29.0" fill="#DEC8EA"/>
<line x1="537.3" y1="906.5" x2="722.3" y2="906.5" stroke="#000" stroke-width="1"/>
<line x1="537.3" y1="913.5" x2="722.3" y2="913.5" stroke="#000" stroke-width="1"/>
<line x1="537.3" y1="920.5" x2="722.3" y2="920.5" stroke="#000" stroke-width="1"/>
<line x1="623.5" y1="906.2" x2="623.5" y2="913.2" stroke="#000" stroke-width="1"/>
<line x1="635.5" y1="906.2" x2="635.5" y2="913.2" stroke="#000" stroke-width="1"/>
<line x1="558.5" y1="913.2" x2="558.5" y2="920.2" stroke="#000" stroke-width="1"/>
<line x1="604.5" y1="913.2" x2="604.5" y2="920.2" stroke="#000" stroke-width="1"/>
<line x1="629.5" y1="913.2" x2="629.5" y2="920.2" stroke="#000" stroke-width="1"/>
<line x1="654.5" y1="913.2" x2="654.5" y2="920.2" stroke="#000" stroke-width="1"/>
<line x1="604.5" y1="920.2" x2="604.5" y2="927.0" stroke="#000" stroke-width="1"/>
<line x1="617.5" y1="920.2" x2="617.5" y2="927.0" stroke="#000" stroke-width="1"/>
<line x1="629.5" y1="920.2" x2="629.5" y2="927.0" stroke="#000" stroke-width="1"/>
<line x1="642.5" y1="920.2" x2="642.5" y2="927.0" stroke="#000" stroke-width="1"/>
<line x1="654.5" y1="920.2" x2="654.5" y2="927.0" stroke="#000" stroke-width="1"/>
<text x="629.8" y="904.5" font-size="6.7" font-weight="bold" fill="#000" text-anchor="middle">AG7_GM_J_001</text>
<text x="579.1" y="911.4" font-size="5.7" stroke="#000" stroke-width="0.1" fill="#141414" text-anchor="middle">HOC_000</text>
<text x="630.0" y="911.1" font-size="6.2" font-weight="bold" fill="#000" text-anchor="middle">C</text>
<text x="679.5" y="911.4" font-size="5.5" stroke="#000" stroke-width="0.1" fill="#141414" text-anchor="middle"></text>
<text x="547.3" y="918.1" font-size="5.9" stroke="#000" stroke-width="0.1" fill="#111" text-anchor="middle">2</text>
<text x="579.9" y="918.4" font-size="5.3" stroke="#000" stroke-width="0.1" fill="#141414" text-anchor="middle">0000000017</text>
<text x="617.0" y="918.4" font-size="5.7" stroke="#000" stroke-width="0.1" fill="#141414" text-anchor="middle"></text>
<text x="640.9" y="918.4" font-size="5.7" stroke="#000" stroke-width="0.1" fill="#141414" text-anchor="middle">Job</text>
<text x="687.8" y="918.4" font-size="5.7" stroke="#000" stroke-width="0.1" fill="#141414" text-anchor="middle">skipTin</text>
<text x="570.4" y="925.1" font-size="5.7" stroke="#000" stroke-width="0.1" fill="#141414" text-anchor="middle">01.11.2016 01:01:26</text>
<text x="687.9" y="925.1" font-size="5.7" stroke="#000" stroke-width="0.1" fill="#141414" text-anchor="middle"></text>
<rect x="536.3" y="945.0" width="187.0" height="29.0" fill="#95C963"/>
<line x1="537.3" y1="953.5" x2="722.3" y2="953.5" stroke="#000" stroke-width="1"/>
<line x1="537.3" y1="960.5" x2="722.3" y2="960.5" stroke="#000" stroke-width="1"/>
<line x1="537.3" y1="967.5" x2="722.3" y2="967.5" stroke="#000" stroke-width="1"/>
<line x1="623.5" y1="953.2" x2="623.5" y2="960.2" stroke="#000" stroke-width="1"/>
<line x1="635.5" y1="953.2" x2="635.5" y2="960.2" stroke="#000" stroke-width="1"/>
<line x1="558.5" y1="960.2" x2="558.5" y2="967.2" stroke="#000" stroke-width="1"/>
<line x1="604.5" y1="960.2" x2="604.5" y2="967.2" stroke="#000" stroke-width="1"/>
<line x1="629.5" y1="960.2" x2="629.5" y2="967.2" stroke="#000" stroke-width="1"/>
<line x1="654.5" y1="960.2" x2="654.5" y2="967.2" stroke="#000" stroke-width="1"/>
<line x1="604.5" y1="967.2" x2="604.5" y2="974.0" stroke="#000" stroke-width="1"/>
<line x1="617.5" y1="967.2" x2="617.5" y2="974.0" stroke="#000" stroke-width="1"/>
<line x1="629.5" y1="967.2" x2="629.5" y2="974.0" stroke="#000" stroke-width="1"/>
<line x1="642.5" y1="967.2" x2="642.5" y2="974.0" stroke="#000" stroke-width="1"/>
<line x1="654.5" y1="967.2" x2="654.5" y2="974.0" stroke="#000" stroke-width="1"/>
<text x="629.8" y="951.5" font-size="6.7" font-weight="bold" fill="#000" text-anchor="middle">GM_OK_03</text>
<text x="579.1" y="958.4" font-size="5.7" stroke="#000" stroke-width="0.1" fill="#141414" text-anchor="middle">HOO_000</text>
<text x="630.0" y="958.1" font-size="6.2" font-weight="bold" fill="#000" text-anchor="middle">C</text>
<text x="679.5" y="958.4" font-size="5.5" stroke="#000" stroke-width="0.1" fill="#141414" text-anchor="middle"></text>
<text x="547.3" y="965.1" font-size="5.9" stroke="#000" stroke-width="0.1" fill="#111" text-anchor="middle">2</text>
<text x="579.9" y="965.4" font-size="5.3" stroke="#000" stroke-width="0.1" fill="#141414" text-anchor="middle">0000000027</text>
<text x="617.0" y="965.4" font-size="5.7" stroke="#000" stroke-width="0.1" fill="#141414" text-anchor="middle"></text>
<text x="640.9" y="965.4" font-size="5.7" stroke="#000" stroke-width="0.1" fill="#141414" text-anchor="middle">Job</text>
<text x="687.8" y="965.4" font-size="5.7" stroke="#000" stroke-width="0.1" fill="#141414" text-anchor="middle">finished</text>
<text x="570.4" y="972.1" font-size="5.7" stroke="#000" stroke-width="0.1" fill="#141414" text-anchor="middle">01.11.2016 01:01:32</text>
<text x="687.9" y="972.1" font-size="5.7" stroke="#000" stroke-width="0.1" fill="#141414" text-anchor="middle">01.11.2016 01:01:43</text>
<polygon points="23.0,623.0 220.0,623.0 210.0,644.0 13.0,644.0" fill="#C3C68C"/>
<line x1="23.5" y1="623.5" x2="23.5" y2="643.5" stroke="#000" stroke-width="1"/>
<line x1="210.5" y1="623.5" x2="210.5" y2="643.5" stroke="#000" stroke-width="1"/>
<line x1="23.0" y1="631.5" x2="210.0" y2="631.5" stroke="#000" stroke-width="1"/>
<line x1="23.0" y1="637.5" x2="210.0" y2="637.5" stroke="#000" stroke-width="1"/>
<line x1="85.5" y1="631.0" x2="85.5" y2="643.5" stroke="#000" stroke-width="1"/>
<text x="116.5" y="629.5" font-size="6.7" font-weight="bold" fill="#000" text-anchor="middle">STD__01______201611010000001</text>
<text x="54.0" y="636.4" font-size="5.8" font-weight="bold" fill="#222" text-anchor="middle">0</text>
<text x="147.0" y="636.4" font-size="5.7" stroke="#000" stroke-width="0.1" fill="#333" text-anchor="middle">Begin</text>
<text x="54.0" y="642.6" font-size="5.7" stroke="#000" stroke-width="0.1" fill="#333" text-anchor="middle">0000000001</text>
<rect x="1326.5" y="623.0" width="197.0" height="21.0" rx="5" fill="#C3C68C"/>
<line x1="1331.5" y1="623.5" x2="1331.5" y2="643.5" stroke="#000" stroke-width="1"/>
<line x1="1518.5" y1="623.5" x2="1518.5" y2="643.5" stroke="#000" stroke-width="1"/>
<line x1="1331.5" y1="631.5" x2="1518.5" y2="631.5" stroke="#000" stroke-width="1"/>
<line x1="1331.5" y1="637.5" x2="1518.5" y2="637.5" stroke="#000" stroke-width="1"/>
<line x1="1393.5" y1="631.0" x2="1393.5" y2="643.5" stroke="#000" stroke-width="1"/>
<text x="1425.0" y="629.5" font-size="6.7" font-weight="bold" fill="#000" text-anchor="middle">STD__01______201611010000001</text>
<text x="1362.5" y="636.4" font-size="5.8" font-weight="bold" fill="#222" text-anchor="middle">0</text>
<text x="1455.5" y="636.4" font-size="5.7" stroke="#000" stroke-width="0.1" fill="#333" text-anchor="middle">End</text>
<text x="1362.5" y="642.6" font-size="5.7" stroke="#000" stroke-width="0.1" fill="#333" text-anchor="middle">0000000002</text>
</svg>
</body></html>
